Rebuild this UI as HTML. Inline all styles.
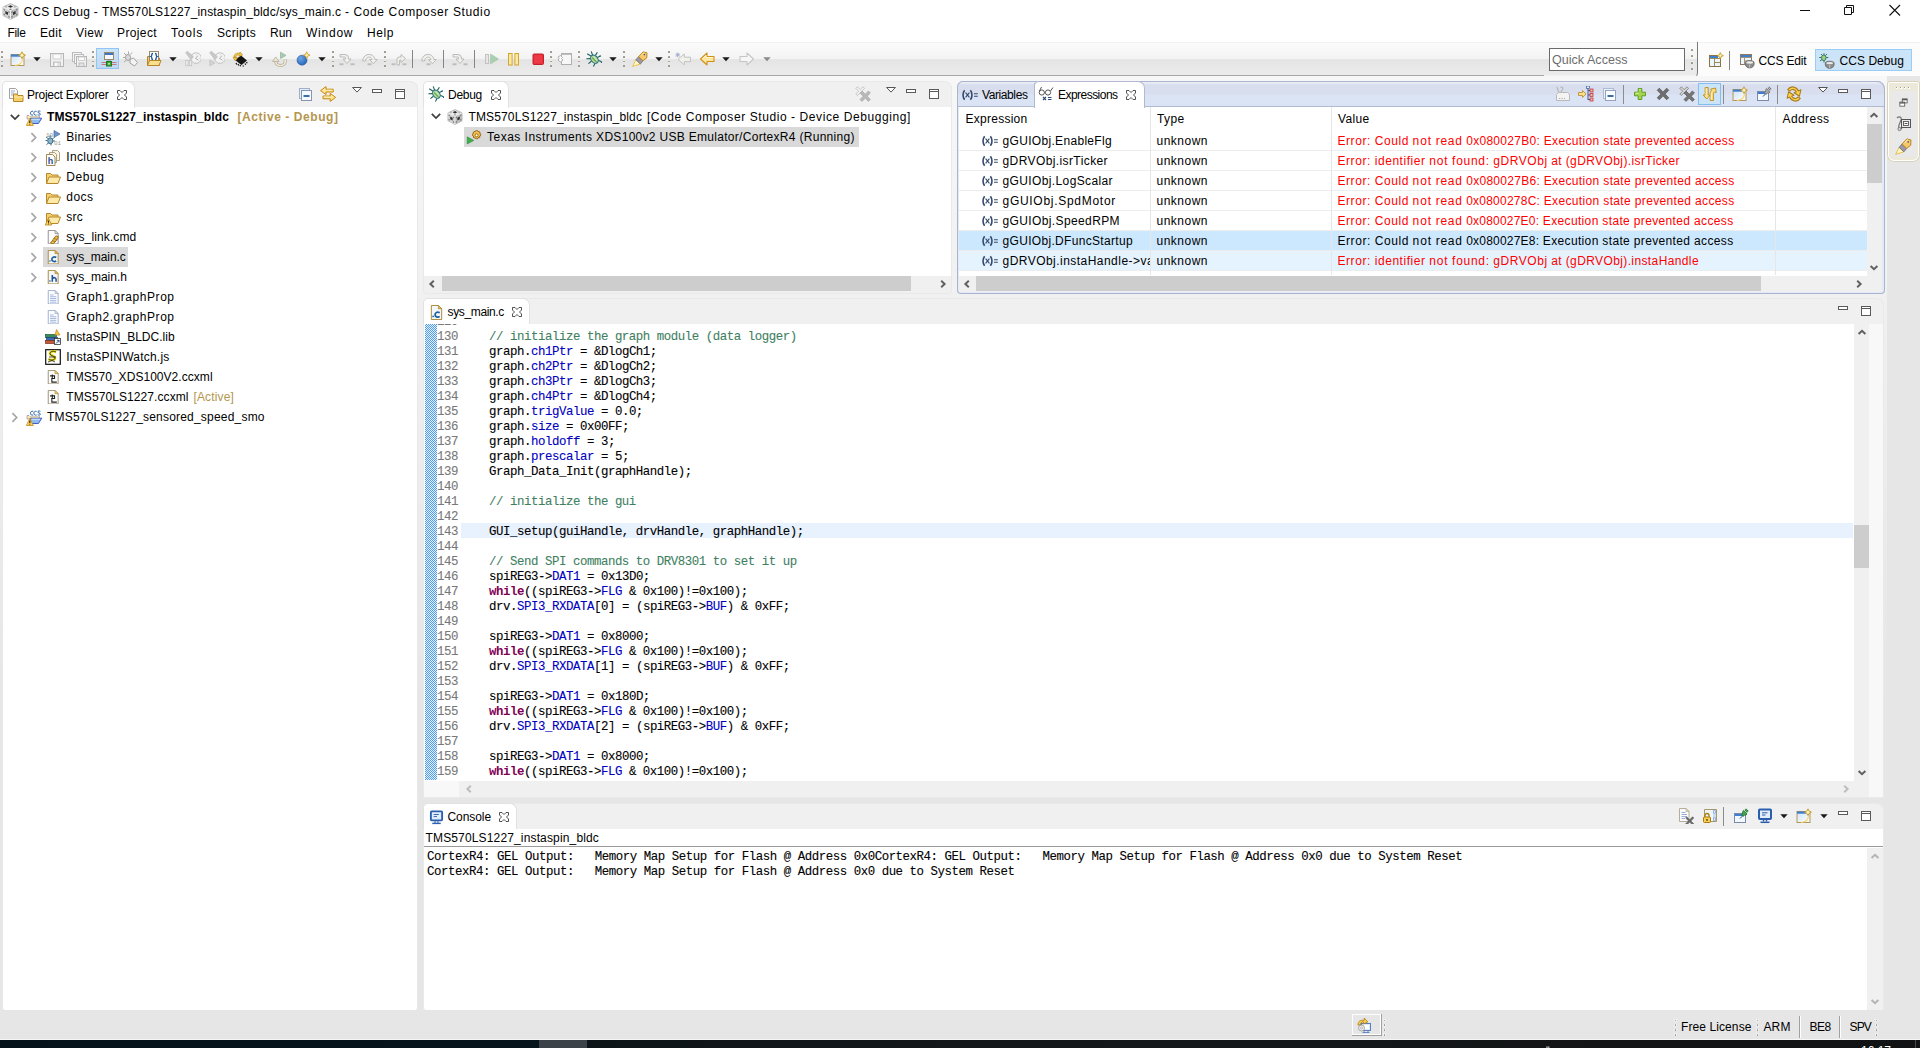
<!DOCTYPE html>
<html><head><meta charset="utf-8"><title>CCS Debug</title><style>
html,body{margin:0;padding:0}
html{width:1920px;height:1048px;overflow:hidden}
body{width:1920px;height:1048px;overflow:hidden;background:#e6e6e6;font-family:"Liberation Sans",sans-serif;font-size:12px;position:relative}
div,span.t,svg{position:absolute;display:block}
span.t{white-space:pre}
pre{position:absolute;margin:0;white-space:pre}
</style></head><body>
<div style="left:0px;top:0px;width:1920px;height:42px;background:#fff"></div>
<svg style="left:1.5px;top:2.5px;" width="17" height="17" viewBox="0 0 16 16"><path d="M8 0.6l7 3.2v8l-7 3.6-7-3.6v-8z" fill="#e9e9e9" stroke="#9a9a9a" stroke-width="0.7"/><path d="M1 3.8l7 3.2v8.4l-7-3.6z" fill="#d2d2d2"/><path d="M15 3.8l-7 3.2v8.4l7-3.6z" fill="#bdbdbd"/><path d="M1 3.8l7 3.2 7-3.2M8 7v8.4" stroke="#f6f6f6" stroke-width="0.8" fill="none"/><path d="M8 2l2.4 1.2-2.4 1.2-2.4-1.2z" fill="#2e2e2e"/><path d="M3.2 7.6l2.4 1.2v2.6l-2.4-1.2z" fill="#2e2e2e"/><path d="M12.8 7.6l-2.4 1.2v2.6l2.4-1.2z" fill="#2e2e2e"/><path d="M3.4 2.9l1.6 0.8-1.6 0.8M12.6 2.9l-1.6 0.8 1.6 0.8M8 5.2l1.6 0.8-1.6 0.6-1.6-0.6z" fill="#8a8a8a"/><path d="M1.6 5.4l1.2 0.6v1.4l-1.2-0.6zM6 7.6l1.2 0.6v1.4l-1.2-0.6zM1.6 9.8l1.2 0.6v1.4l-1.2-0.6zM6 12l1.2 0.6v1.4l-1.2-0.6zM14.4 5.4l-1.2 0.6v1.4l1.2-0.6zM10 7.6l-1.2 0.6v1.4l1.2-0.6zM14.4 9.8l-1.2 0.6v1.4l1.2-0.6zM10 12l-1.2 0.6v1.4l1.2-0.6z" fill="#7a7a7a"/></svg>
<span id="t1" class="t" style="left:23.4px;top:1.84px;line-height:20px;font-size:12px;color:#000;letter-spacing:0.302px;">CCS Debug -</span>
<span id="t2" class="t" style="left:101.9px;top:1.84px;line-height:20px;font-size:12px;color:#000;letter-spacing:0.168px;">TMS570LS1227_instaspin_bldc</span>
<span id="t3" class="t" style="left:275.9px;top:1.84px;line-height:20px;font-size:12px;color:#000;letter-spacing:0.167px;">/sys_main.c</span>
<span id="t4" class="t" style="left:344.9px;top:1.84px;line-height:20px;font-size:12px;color:#000;letter-spacing:0.624px;">- Code Composer Studio</span>
<svg style="left:1790px;top:0" width="130" height="22" viewBox="0 0 130 22"><path d="M10 10.5h10" stroke="#111" stroke-width="1"/><path d="M54.5 7.5h7v7h-7z M56.5 7.5v-2h7v7h-2" fill="none" stroke="#111" stroke-width="1"/><path d="M99.5 5l10.5 10.5M110 5l-10.5 10.5" stroke="#111" stroke-width="1.1"/></svg>
<span id="t5" class="t" style="left:7.5px;top:22.84px;line-height:20px;font-size:12px;color:#000;letter-spacing:-0.336px;">File</span>
<span id="t6" class="t" style="left:40px;top:22.84px;line-height:20px;font-size:12px;color:#000;letter-spacing:0.328px;">Edit</span>
<span id="t7" class="t" style="left:76px;top:22.84px;line-height:20px;font-size:12px;color:#000;letter-spacing:0.376px;">View</span>
<span id="t8" class="t" style="left:117px;top:22.84px;line-height:20px;font-size:12px;color:#000;letter-spacing:0.377px;">Project</span>
<span id="t9" class="t" style="left:171px;top:22.84px;line-height:20px;font-size:12px;color:#000;letter-spacing:0.797px;">Tools</span>
<span id="t10" class="t" style="left:217px;top:22.84px;line-height:20px;font-size:12px;color:#000;letter-spacing:0.330px;">Scripts</span>
<span id="t11" class="t" style="left:270px;top:22.84px;line-height:20px;font-size:12px;color:#000;letter-spacing:-0.005px;">Run</span>
<span id="t12" class="t" style="left:306px;top:22.84px;line-height:20px;font-size:12px;color:#000;letter-spacing:0.769px;">Window</span>
<span id="t13" class="t" style="left:367px;top:22.84px;line-height:20px;font-size:12px;color:#000;letter-spacing:0.578px;">Help</span>
<div style="left:0px;top:42px;width:1920px;height:34px;background:#fcfcfc"></div>
<div style="left:0px;top:42px;width:1920px;height:1px;background:#f1f1f1"></div>
<div style="left:0px;top:43px;width:1697px;height:32px;background:linear-gradient(#fbfbfb 0,#f3f3f3 49%,#e4e4e4 52%,#ececec 100%)"></div>
<div style="left:1544px;top:75px;width:153px;height:1px;background:#f1f1f1"></div>
<svg style="left:1690px;top:42px" width="10" height="36" viewBox="0 0 10 36"><path d="M8 0V34H10V0Z" fill="#fcfcfc"/><path d="M7.5 0V30C7.5 33 6.5 34.5 4.5 35.5" fill="none" stroke="#787878" stroke-width="1"/></svg>
<div style="left:0px;top:75px;width:1544px;height:1px;background:#a8a8a8"></div>
<div style="left:0.6px;top:50.6px;width:2.8px;height:2.8px;background:#ffffff;opacity:.35"></div>
<div style="left:1px;top:51.0px;width:1.9px;height:1.9px;background:#908b78;border-radius:0.6px;opacity:.9"></div>
<div style="left:0.6px;top:55.35px;width:2.8px;height:2.8px;background:#ffffff;opacity:.35"></div>
<div style="left:1px;top:55.75px;width:1.9px;height:1.9px;background:#908b78;border-radius:0.6px;opacity:.9"></div>
<div style="left:0.6px;top:60.1px;width:2.8px;height:2.8px;background:#ffffff;opacity:.35"></div>
<div style="left:1px;top:60.5px;width:1.9px;height:1.9px;background:#908b78;border-radius:0.6px;opacity:.9"></div>
<div style="left:0.6px;top:64.85px;width:2.8px;height:2.8px;background:#ffffff;opacity:.35"></div>
<div style="left:1px;top:65.25px;width:1.9px;height:1.9px;background:#908b78;border-radius:0.6px;opacity:.9"></div>
<svg style="left:9.5px;top:51.0px;" width="16" height="16" viewBox="0 0 16 16"><defs><linearGradient id="gnew2" x1="0" y1="0" x2="1" y2="1"><stop offset="0" stop-color="#cfe3f7"/><stop offset="1" stop-color="#ffffff"/></linearGradient></defs><rect x="1" y="3.5" width="13" height="11" fill="url(#gnew2)" stroke="#b3975a"/><rect x="1" y="3.5" width="9" height="2.2" fill="#3f7fd0"/><path d="M12.5 7.5c0 4-3 6.5-7.5 7" fill="none" stroke="#f7d56a" stroke-width="1.1"/><path d="M12 0.8l1.1 2.3 2.3 1.1-2.3 1.1-1.1 2.3-1.1-2.3-2.3-1.1 2.3-1.1z" fill="#fff3c0" stroke="#c59a22" stroke-width="0.9"/></svg>
<svg style="left:28.5px;top:51.0px;" width="16" height="16" viewBox="0 0 16 16"><path d="M4.300 6.200h7.400l-3.700 4.100z" fill="#1a1a1a"/></svg>
<svg style="left:48.5px;top:51.5px;" width="16" height="16" viewBox="0 0 16 16"><rect x="1.5" y="1.5" width="13" height="13" fill="#f1f1f1" stroke="#b5b5b5"/><rect x="4" y="2" width="8" height="5" fill="#fbfbfb" stroke="#c5c5c5" stroke-width="0.8"/><rect x="4.5" y="10" width="7" height="4.5" fill="#e2e2e2" stroke="#b5b5b5" stroke-width="0.8"/><rect x="6" y="11" width="2" height="3" fill="#fafafa"/></svg>
<svg style="left:71.5px;top:51.5px;" width="16" height="16" viewBox="0 0 16 16"><rect x="0.5" y="0.5" width="9" height="9" fill="#f4f4f4" stroke="#bdbdbd"/><rect x="2.5" y="2.5" width="9" height="9" fill="#f4f4f4" stroke="#bdbdbd"/><rect x="4.5" y="4.5" width="10" height="10" fill="#f1f1f1" stroke="#b5b5b5"/><rect x="6.5" y="5" width="6" height="3.5" fill="#fbfbfb" stroke="#c5c5c5" stroke-width="0.8"/><rect x="7" y="11" width="5" height="3.5" fill="#e2e2e2" stroke="#b5b5b5" stroke-width="0.8"/></svg>
<div style="left:91.6px;top:50.6px;width:2.8px;height:2.8px;background:#ffffff;opacity:.35"></div>
<div style="left:92px;top:51.0px;width:1.9px;height:1.9px;background:#908b78;border-radius:0.6px;opacity:.9"></div>
<div style="left:91.6px;top:55.35px;width:2.8px;height:2.8px;background:#ffffff;opacity:.35"></div>
<div style="left:92px;top:55.75px;width:1.9px;height:1.9px;background:#908b78;border-radius:0.6px;opacity:.9"></div>
<div style="left:91.6px;top:60.1px;width:2.8px;height:2.8px;background:#ffffff;opacity:.35"></div>
<div style="left:92px;top:60.5px;width:1.9px;height:1.9px;background:#908b78;border-radius:0.6px;opacity:.9"></div>
<div style="left:91.6px;top:64.85px;width:2.8px;height:2.8px;background:#ffffff;opacity:.35"></div>
<div style="left:92px;top:65.25px;width:1.9px;height:1.9px;background:#908b78;border-radius:0.6px;opacity:.9"></div>
<div style="left:96px;top:48px;width:23px;height:21px;background:linear-gradient(#cde4f8,#bfd8f0);box-shadow:0 0 0 1px #8fc6f6 inset"></div>
<svg style="left:100.5px;top:51.0px;" width="16" height="16" viewBox="0 0 16 16"><rect x="3.5" y="1.5" width="9" height="7" fill="#f6f9fd" stroke="#9a8a6a"/><rect x="4" y="2" width="8" height="2" fill="#3f74c6"/><path d="M7 8.5v3M9 8.5v3" stroke="#7d8aa3" stroke-width="1"/><path d="M0.5 11.5h15M0.5 13.5h15" stroke="#c47a7a" stroke-width="1"/><rect x="5.5" y="10.5" width="5" height="4.5" fill="#39a237" stroke="#1d7a22"/><rect x="7.2" y="12" width="1.6" height="1.6" fill="#d6f0c2"/></svg>
<svg style="left:122.0px;top:51.0px;" width="16" height="16" viewBox="0 0 16 16"><path d="M2 2l2 2M6.5 0.5v2.5M10 1.5l-1.5 2M1 6.5h2.5M2 11l2-1.5" stroke="#aaa" stroke-width="1"/><ellipse cx="6" cy="6.5" rx="2.6" ry="3" fill="#d9d9d9" stroke="#a2a2a2"/><path d="M8 8.5l3.5-1.5 4 4.5-3 3.5-4.5-3z" fill="#f3f3f3" stroke="#a2a2a2"/></svg>
<svg style="left:146.0px;top:50.5px;" width="16" height="16" viewBox="0 0 16 16"><path d="M1.5 14.5v-9h3l1 1.5h8v7.5z" fill="#f2c661" stroke="#b8872a"/><rect x="3.5" y="0.5" width="9" height="10" fill="#fdfdfd" stroke="#9a8a6a"/><path d="M7 2.5c-1.3 0-1.2 0.8-1.2 1.6 0 0.9-0.4 1.2-1 1.4 0.6 0.2 1 0.5 1 1.4 0 0.8-0.1 1.6 1.2 1.6M9 2.5c1.3 0 1.2 0.8 1.2 1.6 0 0.9 0.4 1.2 1 1.4-0.6 0.2-1 0.5-1 1.4 0 0.8 0.1 1.6-1.2 1.6" fill="none" stroke="#1a5a9c" stroke-width="1.3"/><path d="M1.5 14.5l2-5h11.5l-2 5z" fill="#fadf8f" stroke="#b8872a"/></svg>
<svg style="left:165.0px;top:51.0px;" width="16" height="16" viewBox="0 0 16 16"><path d="M4.300 6.200h7.400l-3.700 4.100z" fill="#1a1a1a"/></svg>
<svg style="left:185.0px;top:51.0px;" width="16" height="16" viewBox="0 0 16 16"><circle cx="11" cy="7.100" r="5.300" fill="#f4f4f4" stroke="#c4c4c4" stroke-width="1"/><path d="M13.200 4.600l-2.800 2.700 3.200 2" fill="none" stroke="#b0b0b0" stroke-width="1"/><path d="M11 3.300v0.800M11 10.500v0.800M7 7.300h0.800M14.200 7.300h0.800" stroke="#cfcfcf" stroke-width="0.8"/><path d="M0.600 1.800l1.800-1.600 6 5.400-2.600 2.800z" fill="#c8c8c8" stroke="#b8b8b8" stroke-width="0.6"/><rect x="0.800" y="9.500" width="2.300" height="5.200" fill="#f0f0f0" stroke="#c2c2c2" stroke-width="0.8"/><rect x="4.400" y="9.500" width="2.300" height="5.200" fill="#f0f0f0" stroke="#c2c2c2" stroke-width="0.8"/></svg>
<svg style="left:209.0px;top:51.0px;" width="16" height="16" viewBox="0 0 16 16"><circle cx="11" cy="7.100" r="5.300" fill="#f4f4f4" stroke="#c4c4c4" stroke-width="1"/><path d="M13.200 4.600l-2.800 2.700 3.200 2" fill="none" stroke="#b0b0b0" stroke-width="1"/><path d="M11 3.300v0.800M11 10.500v0.800M7 7.300h0.800M14.200 7.300h0.800" stroke="#cfcfcf" stroke-width="0.8"/><path d="M0.600 1.800l1.800-1.600 6 5.400-2.600 2.800z" fill="#c8c8c8" stroke="#b8b8b8" stroke-width="0.6"/><path d="M0.800 9l5 2.900-5 2.900z" fill="#d4d4d4" stroke="#c2c2c2" stroke-width="0.8"/></svg>
<svg style="left:232.0px;top:51.0px;" width="16" height="16" viewBox="0 0 16 16"><path d="M3 9l6-4.5 6 5-5.5 4.5z" fill="#151515"/><path d="M4 12l0.8 1.5M6 13l0.8 1.5M8 14l0.8 1.3M11 14.5l0.5 1M13 12.5l0.7 1.2M14.5 11l0.7 1.2" stroke="#111" stroke-width="1.2"/><path d="M2 6c0-3 3-4.5 5.5-3.5l0.5-1.5 2.5 3-3.5 1.5 0.3-1.5c-1.5-0.5-3.3 0.3-3.5 2z" fill="#f5c84a" stroke="#b98a1a" stroke-width="0.7"/><path d="M1 6.5l2.5 3.5 2-3.5z" fill="#f5c84a" stroke="#b98a1a" stroke-width="0.7"/></svg>
<svg style="left:251.0px;top:51.0px;" width="16" height="16" viewBox="0 0 16 16"><path d="M4.300 6.200h7.400l-3.700 4.100z" fill="#1a1a1a"/></svg>
<svg style="left:272.0px;top:51.0px;" width="16" height="16" viewBox="0 0 16 16"><path d="M8.5 1.2l5.5 3.2-5.5 3.2z" fill="#a9c9b0" stroke="#8fb59a" stroke-width="0.7"/><path d="M13.2 8v2.5c0 2.3-2 4-4.7 4s-4.7-1.7-4.7-4v-0.5" fill="none" stroke="#b3aa92" stroke-width="3"/><path d="M13.2 8v2.5c0 2.3-2 4-4.7 4s-4.7-1.7-4.7-4v-0.5" fill="none" stroke="#efeadc" stroke-width="1.6"/><path d="M0.6 10.4l3.2-4.4 3.2 4.4z" fill="#efeadc" stroke="#b3aa92" stroke-width="0.8"/></svg>
<svg style="left:294.0px;top:51.0px;" width="16" height="16" viewBox="0 0 16 16"><defs><radialGradient id="gball15" cx="0.35" cy="0.3" r="0.8"><stop offset="0" stop-color="#6fa5e6"/><stop offset="1" stop-color="#1f5fb5"/></radialGradient></defs><circle cx="8" cy="9.2" r="5" fill="url(#gball15)" stroke="#2a5aa0" stroke-width="0.6"/><path d="M12.7 0.8l1 2.4 2.3 1-2.3 1-1 2.4-1-2.4-2.3-1 2.3-1z" fill="#fff0b0" stroke="#c9991e" stroke-width="0.8"/></svg>
<svg style="left:314.0px;top:51.0px;" width="16" height="16" viewBox="0 0 16 16"><path d="M4.300 6.200h7.400l-3.700 4.100z" fill="#1a1a1a"/></svg>
<div style="left:331.6px;top:50.6px;width:2.8px;height:2.8px;background:#ffffff;opacity:.35"></div>
<div style="left:332px;top:51.0px;width:1.9px;height:1.9px;background:#908b78;border-radius:0.6px;opacity:.9"></div>
<div style="left:331.6px;top:55.35px;width:2.8px;height:2.8px;background:#ffffff;opacity:.35"></div>
<div style="left:332px;top:55.75px;width:1.9px;height:1.9px;background:#908b78;border-radius:0.6px;opacity:.9"></div>
<div style="left:331.6px;top:60.1px;width:2.8px;height:2.8px;background:#ffffff;opacity:.35"></div>
<div style="left:332px;top:60.5px;width:1.9px;height:1.9px;background:#908b78;border-radius:0.6px;opacity:.9"></div>
<div style="left:331.6px;top:64.85px;width:2.8px;height:2.8px;background:#ffffff;opacity:.35"></div>
<div style="left:332px;top:65.25px;width:1.9px;height:1.9px;background:#908b78;border-radius:0.6px;opacity:.9"></div>
<svg style="left:339.0px;top:51.0px;" width="16" height="16" viewBox="0 0 16 16"><g transform="translate(0 2)"><path d="M1 1.500h5q3.500 0 3.500 3.500v1h2.500l-4 4.500-4-4.500h2.500v-1q0-1-1-1h-4.500z" fill="#f1f1ec" stroke="#b6b6b6" stroke-width="0.9" stroke-linejoin="round"/><rect x="0.500" y="10.300" width="4" height="1.900" fill="#bcbcbc"/><rect x="11.500" y="10.300" width="4" height="1.900" fill="#bcbcbc"/></g></svg>
<svg style="left:362.0px;top:51.0px;" width="16" height="16" viewBox="0 0 16 16"><g transform="translate(0 2)"><path d="M0.800 8c0-8.500 11.500-8.500 12-1.500h2.400l-3.800 4.200-3.800-4.200h2.400c-0.500-3.500-6.200-3.200-6.500 1.500z" fill="#f1f1ec" stroke="#b6b6b6" stroke-width="0.9" stroke-linejoin="round"/><rect x="5.500" y="10.300" width="4" height="1.900" fill="#bcbcbc"/></g></svg>
<div style="left:383.6px;top:50.6px;width:2.8px;height:2.8px;background:#ffffff;opacity:.35"></div>
<div style="left:384px;top:51.0px;width:1.9px;height:1.9px;background:#908b78;border-radius:0.6px;opacity:.9"></div>
<div style="left:383.6px;top:55.35px;width:2.8px;height:2.8px;background:#ffffff;opacity:.35"></div>
<div style="left:384px;top:55.75px;width:1.9px;height:1.9px;background:#908b78;border-radius:0.6px;opacity:.9"></div>
<div style="left:383.6px;top:60.1px;width:2.8px;height:2.8px;background:#ffffff;opacity:.35"></div>
<div style="left:384px;top:60.5px;width:1.9px;height:1.9px;background:#908b78;border-radius:0.6px;opacity:.9"></div>
<div style="left:383.6px;top:64.85px;width:2.8px;height:2.8px;background:#ffffff;opacity:.35"></div>
<div style="left:384px;top:65.25px;width:1.9px;height:1.9px;background:#908b78;border-radius:0.6px;opacity:.9"></div>
<svg style="left:390.5px;top:51.0px;" width="16" height="16" viewBox="0 0 16 16"><g transform="translate(0 2)"><path d="M6 12v-5.500q0-2.500 2.500-2.500h1.500v-2.500l4.500 4-4.500 4v-2.500h-1q-0.500 0-0.500 0.500v4.500z" fill="#f1f1ec" stroke="#b6b6b6" stroke-width="0.9" stroke-linejoin="round"/><rect x="0.500" y="10.300" width="4" height="1.900" fill="#bcbcbc"/><rect x="11.500" y="10.300" width="4" height="1.900" fill="#bcbcbc"/></g></svg>
<div style="left:412px;top:50px;width:1px;height:18px;background:#858585"></div>
<svg style="left:421.0px;top:51.0px;" width="16" height="16" viewBox="0 0 16 16"><g transform="translate(0 2)"><path d="M0.800 8c0-8.500 11.500-8.500 12-1.500h2.400l-3.800 4.200-3.800-4.200h2.400c-0.500-3.500-6.200-3.200-6.500 1.500z" fill="#f1f1ec" stroke="#b6b6b6" stroke-width="0.9" stroke-linejoin="round"/><rect x="5.500" y="10.300" width="4" height="1.900" fill="#bcbcbc"/></g></svg>
<div style="left:443px;top:50px;width:1px;height:18px;background:#858585"></div>
<svg style="left:452.0px;top:51.0px;" width="16" height="16" viewBox="0 0 16 16"><g transform="translate(0 2)"><path d="M1 1.500h5q3.500 0 3.500 3.500v1h2.500l-4 4.500-4-4.500h2.500v-1q0-1-1-1h-4.500z" fill="#f1f1ec" stroke="#b6b6b6" stroke-width="0.9" stroke-linejoin="round"/><rect x="0.500" y="10.300" width="4" height="1.900" fill="#bcbcbc"/><rect x="11.500" y="10.300" width="4" height="1.900" fill="#bcbcbc"/></g></svg>
<div style="left:474px;top:50px;width:1px;height:18px;background:#858585"></div>
<svg style="left:483.5px;top:51.0px;" width="16" height="16" viewBox="0 0 16 16"><rect x="1.5" y="3.5" width="3" height="9" fill="#e6e6e6" stroke="#c2c2c2"/><path d="M6.5 3l8 5-8 5z" fill="#a9cfb0" stroke="#9fc4a6" stroke-width="0.6"/></svg>
<svg style="left:506.0px;top:51.0px;" width="16" height="16" viewBox="0 0 16 16"><rect x="2.5" y="2.5" width="3.6" height="11.5" fill="#fbe9a6" stroke="#d1a630"/><rect x="8.9" y="2.5" width="3.6" height="11.5" fill="#fbe9a6" stroke="#d1a630"/></svg>
<svg style="left:529.5px;top:51.0px;" width="16" height="16" viewBox="0 0 16 16"><rect x="3" y="3" width="10.5" height="10.5" rx="1" fill="#e8303a" stroke="#c2222c"/><rect x="4.5" y="4.5" width="7.5" height="7.5" fill="#ee3a46"/></svg>
<div style="left:549.6px;top:50.6px;width:2.8px;height:2.8px;background:#ffffff;opacity:.35"></div>
<div style="left:550px;top:51.0px;width:1.9px;height:1.9px;background:#908b78;border-radius:0.6px;opacity:.9"></div>
<div style="left:549.6px;top:55.35px;width:2.8px;height:2.8px;background:#ffffff;opacity:.35"></div>
<div style="left:550px;top:55.75px;width:1.9px;height:1.9px;background:#908b78;border-radius:0.6px;opacity:.9"></div>
<div style="left:549.6px;top:60.1px;width:2.8px;height:2.8px;background:#ffffff;opacity:.35"></div>
<div style="left:550px;top:60.5px;width:1.9px;height:1.9px;background:#908b78;border-radius:0.6px;opacity:.9"></div>
<div style="left:549.6px;top:64.85px;width:2.8px;height:2.8px;background:#ffffff;opacity:.35"></div>
<div style="left:550px;top:65.25px;width:1.9px;height:1.9px;background:#908b78;border-radius:0.6px;opacity:.9"></div>
<svg style="left:556.5px;top:51.0px;" width="16" height="16" viewBox="0 0 16 16"><rect x="4.5" y="2.5" width="10" height="11" fill="#f7f7f7" stroke="#b0b0b0"/><path d="M4.5 3h10" stroke="#b0b0b0" stroke-width="1.6"/><path d="M1 6l2.5-1.5 2 2-1 1 1.5 1.5-2.5 2-2.5-2 1.2-1.2z" fill="#fafafa" stroke="#a8a8a8" stroke-width="0.9"/></svg>
<div style="left:577.6px;top:50.6px;width:2.8px;height:2.8px;background:#ffffff;opacity:.35"></div>
<div style="left:578px;top:51.0px;width:1.9px;height:1.9px;background:#908b78;border-radius:0.6px;opacity:.9"></div>
<div style="left:577.6px;top:55.35px;width:2.8px;height:2.8px;background:#ffffff;opacity:.35"></div>
<div style="left:578px;top:55.75px;width:1.9px;height:1.9px;background:#908b78;border-radius:0.6px;opacity:.9"></div>
<div style="left:577.6px;top:60.1px;width:2.8px;height:2.8px;background:#ffffff;opacity:.35"></div>
<div style="left:578px;top:60.5px;width:1.9px;height:1.9px;background:#908b78;border-radius:0.6px;opacity:.9"></div>
<div style="left:577.6px;top:64.85px;width:2.8px;height:2.8px;background:#ffffff;opacity:.35"></div>
<div style="left:578px;top:65.25px;width:1.9px;height:1.9px;background:#908b78;border-radius:0.6px;opacity:.9"></div>
<svg style="left:586.0px;top:51.0px;" width="16" height="16" viewBox="0 0 16 16"><path d="M5.2 5.2l-4-2.4M6.6 4.2l-1.4-3.8M4.4 7.6l-4 0.2M5.4 10.2l-3 2.4M9.4 4.4l2-3.2M11.4 6.4l3.6-1.6M12 9.2l3.6 1.6M9 12.4l-1.6 3.2M13.4 4.8l1.2 0.8M15.6 10.8l-0.2 1.2" stroke="#1f5f5f" stroke-width="1.1" fill="none"/><ellipse cx="8.4" cy="8.2" rx="3.3" ry="4.5" transform="rotate(-38 8.4 8.2)" fill="#b4d99c" stroke="#1f6a7a" stroke-width="1"/><path d="M6.2 6.4l4.2 4.4" stroke="#6fae5a" stroke-width="1.6"/><path d="M7.2 5.6l3.8 4" stroke="#e4f3d6" stroke-width="0.9"/></svg>
<svg style="left:605.0px;top:51.0px;" width="16" height="16" viewBox="0 0 16 16"><path d="M4.300 6.200h7.400l-3.700 4.100z" fill="#1a1a1a"/></svg>
<div style="left:622.6px;top:50.6px;width:2.8px;height:2.8px;background:#ffffff;opacity:.35"></div>
<div style="left:623px;top:51.0px;width:1.9px;height:1.9px;background:#908b78;border-radius:0.6px;opacity:.9"></div>
<div style="left:622.6px;top:55.35px;width:2.8px;height:2.8px;background:#ffffff;opacity:.35"></div>
<div style="left:623px;top:55.75px;width:1.9px;height:1.9px;background:#908b78;border-radius:0.6px;opacity:.9"></div>
<div style="left:622.6px;top:60.1px;width:2.8px;height:2.8px;background:#ffffff;opacity:.35"></div>
<div style="left:623px;top:60.5px;width:1.9px;height:1.9px;background:#908b78;border-radius:0.6px;opacity:.9"></div>
<div style="left:622.6px;top:64.85px;width:2.8px;height:2.8px;background:#ffffff;opacity:.35"></div>
<div style="left:623px;top:65.25px;width:1.9px;height:1.9px;background:#908b78;border-radius:0.6px;opacity:.9"></div>
<svg style="left:631.5px;top:51.0px;" width="16" height="16" viewBox="0 0 16 16"><path d="M0.600 15.400l3.200-6.600 4.600 4.200z" fill="#fff6c8" stroke="#e8b830" stroke-width="0.8" stroke-linejoin="round"/><path d="M3.800 8.800l2.800-3.200 4.400 4.200-2.600 3.200z" fill="#9a98a6" stroke="#6a6a74" stroke-width="0.7"/><path d="M6.600 5.600l4.600-4.800 3.800 1-0.200 5-3.800 3z" fill="#f6c86a" stroke="#b8801a" stroke-width="0.9" stroke-linejoin="round"/><path d="M9.200 4.400l3-3" stroke="#fde6a8" stroke-width="1"/><circle cx="12.400" cy="3.600" r="0.800" fill="#2a5a9a"/></svg>
<svg style="left:650.5px;top:51.0px;" width="16" height="16" viewBox="0 0 16 16"><path d="M4.300 6.200h7.400l-3.700 4.100z" fill="#1a1a1a"/></svg>
<div style="left:667.6px;top:50.6px;width:2.8px;height:2.8px;background:#ffffff;opacity:.35"></div>
<div style="left:668px;top:51.0px;width:1.9px;height:1.9px;background:#908b78;border-radius:0.6px;opacity:.9"></div>
<div style="left:667.6px;top:55.35px;width:2.8px;height:2.8px;background:#ffffff;opacity:.35"></div>
<div style="left:668px;top:55.75px;width:1.9px;height:1.9px;background:#908b78;border-radius:0.6px;opacity:.9"></div>
<div style="left:667.6px;top:60.1px;width:2.8px;height:2.8px;background:#ffffff;opacity:.35"></div>
<div style="left:668px;top:60.5px;width:1.9px;height:1.9px;background:#908b78;border-radius:0.6px;opacity:.9"></div>
<div style="left:667.6px;top:64.85px;width:2.8px;height:2.8px;background:#ffffff;opacity:.35"></div>
<div style="left:668px;top:65.25px;width:1.9px;height:1.9px;background:#908b78;border-radius:0.6px;opacity:.9"></div>
<svg style="left:675.0px;top:51.0px;" width="16" height="16" viewBox="0 0 16 16"><path d="M15.500 6.200h-6.200v-3.200l-6.300 5.400 6.300 5.400v-3.200h6.200z" fill="#f1f1ec" stroke="#bdbdbd" stroke-width="0.9" stroke-linejoin="round"/><path d="M1 2.200l3.400 3.400M4.400 2.200l-3.400 3.400M2.700 1.400v5M0.400 3.900h4.600" stroke="#9aa6c4" stroke-width="0.8"/></svg>
<svg style="left:698.5px;top:51.0px;" width="16" height="16" viewBox="0 0 16 16"><path d="M15 5.5h-7v-3.5l-6.5 6 6.5 6v-3.5h7z" fill="#fce6a0" stroke="#d0901a" stroke-width="1.1" stroke-linejoin="round"/><path d="M14 6.5h-7v-2l-3.8 3.5" fill="none" stroke="#fff6d4" stroke-width="0.9"/></svg>
<svg style="left:718.0px;top:51.0px;" width="16" height="16" viewBox="0 0 16 16"><path d="M4.300 6.200h7.400l-3.700 4.100z" fill="#1a1a1a"/></svg>
<svg style="left:738.5px;top:51.0px;" width="16" height="16" viewBox="0 0 16 16"><path d="M1 5.5h7v-3.5l6.5 6-6.5 6v-3.5h-7z" fill="#f6f6f6" stroke="#c6c6c6" stroke-width="1.1" stroke-linejoin="round"/></svg>
<svg style="left:758.5px;top:51.0px;" width="16" height="16" viewBox="0 0 16 16"><path d="M4.300 6.200h7.400l-3.700 4.100z" fill="#8a8a8a"/></svg>
<div style="left:1549px;top:48px;width:136px;height:23px;background:#fff;box-shadow:0 0 0 1px #6a6a6a inset"></div>
<span id="t14" class="t" style="left:1552px;top:49.67px;line-height:20px;font-size:12.5px;color:#6d6d6d;letter-spacing:0.039px;">Quick Access</span>
<div style="left:1690.8999999999999px;top:48.4px;width:2.8px;height:2.8px;background:#ffffff;opacity:.35"></div>
<div style="left:1691.3px;top:48.8px;width:1.9px;height:1.9px;background:#908b78;border-radius:0.6px;opacity:.9"></div>
<div style="left:1690.8999999999999px;top:54.9px;width:2.8px;height:2.8px;background:#ffffff;opacity:.35"></div>
<div style="left:1691.3px;top:55.3px;width:1.9px;height:1.9px;background:#908b78;border-radius:0.6px;opacity:.9"></div>
<div style="left:1690.8999999999999px;top:61.4px;width:2.8px;height:2.8px;background:#ffffff;opacity:.35"></div>
<div style="left:1691.3px;top:61.8px;width:1.9px;height:1.9px;background:#908b78;border-radius:0.6px;opacity:.9"></div>
<div style="left:1690.8999999999999px;top:67.89999999999999px;width:2.8px;height:2.8px;background:#ffffff;opacity:.35"></div>
<div style="left:1691.3px;top:68.3px;width:1.9px;height:1.9px;background:#908b78;border-radius:0.6px;opacity:.9"></div>
<svg style="left:1708.0px;top:52.0px;" width="16" height="16" viewBox="0 0 16 16"><rect x="1.5" y="3.5" width="11" height="11" fill="#eef6fd" stroke="#8a7444"/><path d="M1.5 6.5h11M6.5 6.5v8M6.5 10.5h6" stroke="#a08a5a" stroke-width="1"/><rect x="2" y="4" width="8" height="2" fill="#3f7fd0"/><path d="M12.3 0.6l0.9 2.2 2.2 0.9-2.2 0.9-0.9 2.2-0.9-2.2-2.2-0.9 2.2-0.9z" fill="#fff3c0" stroke="#c59a22" stroke-width="0.9"/></svg>
<div style="left:1729px;top:51px;width:1px;height:19px;background:#858585"></div>
<svg style="left:1739.0px;top:53.0px;" width="16" height="16" viewBox="0 0 16 16"><rect x="1.5" y="1.5" width="11" height="10" fill="#eef6fd" stroke="#8a7a5a"/><path d="M1.5 4.5h11M5.5 4.5v7M5.5 8h7" stroke="#a09478" stroke-width="1"/><rect x="2" y="2" width="10" height="2" fill="#3f7fd0"/><path d="M6.3 9.4c0-1 2-1.8 4.4-1.8s4.4 0.8 4.4 1.8v2c0 1.6-2 3.6-4.4 3.6s-4.4-2-4.4-3.6z" fill="#8c8c8c" stroke="#5a5a5a" stroke-width="0.7"/><ellipse cx="10.7" cy="9.5" rx="3.4" ry="1.2" fill="#e9e9e9"/><path d="M10.7 11.5v3.2" stroke="#d0d0d0" stroke-width="0.8"/></svg>
<span id="t15" class="t" style="left:1758.5px;top:50.84px;line-height:20px;font-size:12px;color:#000;letter-spacing:-0.170px;">CCS Edit</span>
<div style="left:1815px;top:49px;width:97px;height:22px;background:#cce4f7;box-shadow:0 0 0 1px #99cdf5 inset"></div>
<svg style="left:1819.0px;top:53.0px;" width="16" height="16" viewBox="0 0 16 16"><path d="M2 1l1.5 1.5M5 0.3v2M8 1l-1.5 1.5M0.3 4.5h2M1 8l2-1.5M9.3 4.5h-2M5 9.5v-2" stroke="#1f5f4f" stroke-width="0.9"/><ellipse cx="4.8" cy="4.8" rx="2.3" ry="2.8" fill="#9fd07a" stroke="#1f6a5a" stroke-width="0.8"/><path d="M6.3 10c0-1 2-1.8 4.4-1.8s4.4 0.8 4.4 1.8v1.8c0 1.6-2 3.6-4.4 3.6s-4.4-2-4.4-3.6z" fill="#8c8c8c" stroke="#5a5a5a" stroke-width="0.7"/><ellipse cx="10.7" cy="10.1" rx="3.4" ry="1.2" fill="#e9e9e9"/><path d="M10.7 12v3.2" stroke="#d0d0d0" stroke-width="0.8"/></svg>
<span id="t16" class="t" style="left:1839.5px;top:51.34px;line-height:20px;font-size:12px;color:#000;letter-spacing:0.052px;">CCS Debug</span>
<div style="left:0px;top:76px;width:1887px;height:934px;background:linear-gradient(#f7f7f7 0,#f1f1f1 200px,#e6e6e6 620px)"></div>
<div style="left:2px;top:81px;width:416px;height:930px;border-radius:6px 8px 4px 4px;background:#f0f0f0;box-shadow:0 0 0 1px #e9e9e9 inset"></div>
<div style="left:3px;top:107px;width:414px;height:903px;background:#fff;border-radius:0 0 3px 3px"></div>
<div style="left:2px;top:81px;width:131px;height:26px;background:#fff;border-radius:5px 7px 0 0;border:1px solid #e2e2e2;border-bottom:none"></div>
<svg style="left:7.5px;top:86.5px;" width="16" height="16" viewBox="0 0 16 16"><path d="M1.5 1.5h6l2 2v8h-8z" fill="#fbfbfb" stroke="#8a8a8a" stroke-width="0.8"/><path d="M3 4h4M3 6h3M3 8h3" stroke="#7f9fd0" stroke-width="0.8"/><path d="M5.5 14.5v-7.5h3.5l1 1.5h5v6z" fill="#f7cf6b" stroke="#b8872a"/><path d="M6 10h9" stroke="#fde9a8" stroke-width="1"/></svg>
<span id="t17" class="t" style="left:27px;top:84.84px;line-height:20px;font-size:12px;color:#000;letter-spacing:-0.242px;">Project Explorer</span>
<svg style="left:114.0px;top:87.0px;" width="16" height="16" viewBox="0 0 16 16"><path d="M3.5 3.5h2.5l2 2 2-2h2.5v2.5l-2 2 2 2v2.5h-2.5l-2-2-2 2h-2.5v-2.5l2-2-2-2z" fill="#fff" stroke="#505050" stroke-width="1" stroke-linejoin="miter"/></svg>
<svg style="left:298.0px;top:86.0px;" width="16" height="16" viewBox="0 0 16 16"><rect x="1.5" y="2.5" width="10" height="10" fill="#dcf0fb" stroke="#a4aec8"/><rect x="3.5" y="4.5" width="10" height="10" fill="#f2fbff" stroke="#8a94b0"/><path d="M5.5 10h6" stroke="#0f4a8a" stroke-width="1.6"/></svg>
<svg style="left:320.0px;top:86.0px;" width="16" height="16" viewBox="0 0 16 16"><path d="M0.6 4.6L6 0.6V3.2H13.2V6H6V8.6Z" fill="#fde48e" stroke="#c8860a" stroke-width="1" stroke-linejoin="round"/><path d="M15.6 11.4L10.2 7.4V10H3V12.8H10.2V15.4Z" fill="#fde48e" stroke="#c8860a" stroke-width="1" stroke-linejoin="round"/><path d="M2.6 4.6l2.6-1.9M6.5 4.2h6M13.6 11.4l-2.6-1.9M9.8 11h-6" stroke="#fff8d8" stroke-width="0.8" fill="none"/></svg>
<svg style="left:349.0px;top:84.0px;" width="16" height="16" viewBox="0 0 16 16"><path d="M3.6 3.5h8.8l-4.4 4.6z" fill="#fff" stroke="#555" stroke-width="1"/></svg>
<svg style="left:369.0px;top:86.0px;" width="16" height="16" viewBox="0 0 16 16"><rect x="3.5" y="3.5" width="9" height="3" fill="#fff" stroke="#5a5a5a"/></svg>
<svg style="left:392.0px;top:86.0px;" width="16" height="16" viewBox="0 0 16 16"><rect x="3.5" y="3.5" width="9" height="9" fill="#fff" stroke="#5a5a5a"/><path d="M3.5 5.5h9" stroke="#5a5a5a" stroke-width="1"/></svg>
<svg style="left:6.5px;top:109.5px;" width="16" height="16" viewBox="0 0 16 16"><path d="M3.8 4.8l4.2 4.3 4.2-4.3" fill="none" stroke="#404040" stroke-width="1.7"/></svg>
<svg style="left:26.0px;top:109.5px;" width="16" height="16" viewBox="0 0 16 16"><path d="M1 5.5h2l1 1h9.5v2.5h-12.5z" fill="#fbe6a2" stroke="#8a7fb0" stroke-width="0.6"/><path d="M2.5 6.5h10.5v1.6h-10.5z" fill="#fde9a8"/><path d="M4.5 8.2h11.3l-3.4 5.3h-7.9z" fill="#8fbdf2" stroke="#3050c0" stroke-width="0.9"/><path d="M5.5 9.2h8.5" stroke="#d6e8fb" stroke-width="1"/><path d="M7.2 1.4c-1.6-0.6-2.7 0.4-2.7 1.8s1.1 2.4 2.7 1.8M10.6 1.4c-1.6-0.6-2.7 0.4-2.7 1.8s1.1 2.4 2.7 1.8M14.4 1.3c-1.4-0.6-2.6-0.2-2.6 0.7 0 1.3 2.6 0.8 2.6 2.1 0 1-1.4 1.3-2.8 0.7" fill="none" stroke="#1c5a9e" stroke-width="0.95"/><path d="M3.8 8.4l3.5 7.1h-7z" fill="#f9d264" stroke="#c98a1a" stroke-width="0.8" stroke-linejoin="round"/><path d="M3.8 10.6v2.4M3.8 13.7v0.9" stroke="#2a1a00" stroke-width="1.1"/></svg>
<span id="t18" class="t" style="left:47.0px;top:106.84px;line-height:20px;font-size:12px;color:#000;font-weight:bold;letter-spacing:0.145px;">TMS570LS1227_instaspin_bldc</span>
<span id="t19" class="t" style="left:237.5px;top:106.84px;line-height:20px;font-size:12px;color:#b5964d;font-weight:bold;letter-spacing:0.562px;">[Active - Debug]</span>
<svg style="left:25.799999999999997px;top:129.5px;" width="16" height="16" viewBox="0 0 16 16"><path d="M5.4 3.2l4.3 4.3-4.3 4.3" fill="none" stroke="#a6a6a6" stroke-width="1.7"/></svg>
<svg style="left:44.7px;top:129.5px;" width="16" height="16" viewBox="0 0 16 16"><text x="1" y="6.5" font-family="Liberation Mono, monospace" font-size="6" fill="#8a8a8a">10</text><text x="9" y="15" font-family="Liberation Mono, monospace" font-size="6" fill="#9a9a9a">01</text><path d="M9 0.5l6 3.5-6 3.5z" fill="#6f93c8" stroke="#4a6fa8" stroke-width="0.7"/><path d="M1 7l2 1.5M5 5.5v2M9 7.5l-1.5 1.5M0.5 10.5h2M1.5 14.5l2-1.5M10 11h-2M6 15.5v-2" stroke="#2a5f7f" stroke-width="0.9"/><ellipse cx="5.3" cy="10.8" rx="2.6" ry="3" fill="#8fb6c8" stroke="#2a5f7f" stroke-width="0.9"/></svg>
<span id="t20" class="t" style="left:66.3px;top:126.84px;line-height:20px;font-size:12px;color:#000;letter-spacing:0.243px;">Binaries</span>
<svg style="left:25.799999999999997px;top:149.5px;" width="16" height="16" viewBox="0 0 16 16"><path d="M5.4 3.2l4.3 4.3-4.3 4.3" fill="none" stroke="#a6a6a6" stroke-width="1.7"/></svg>
<svg style="left:44.7px;top:149.5px;" width="16" height="16" viewBox="0 0 16 16"><path d="M7.5 0.5h5l2 2v8h-7z" fill="#f7f3e6" stroke="#9a8a6a" stroke-width="0.8"/><path d="M4.5 2.5h5l2 2v8h-7z" fill="#f7f3e6" stroke="#9a8a6a" stroke-width="0.8"/><path d="M1.5 4.5h6l2.5 2.5v8.5h-8.5z" fill="#fdfdfd" stroke="#9a7a3a" stroke-width="0.9"/><text x="2.8" y="14" font-family="Liberation Sans, sans-serif" font-size="9" font-weight="bold" fill="#1f4fa0">h</text></svg>
<span id="t21" class="t" style="left:66.3px;top:146.84px;line-height:20px;font-size:12px;color:#000;letter-spacing:0.350px;">Includes</span>
<svg style="left:25.799999999999997px;top:169.5px;" width="16" height="16" viewBox="0 0 16 16"><path d="M5.4 3.2l4.3 4.3-4.3 4.3" fill="none" stroke="#a6a6a6" stroke-width="1.7"/></svg>
<svg style="left:44.7px;top:169.5px;" width="16" height="16" viewBox="0 0 16 16"><path d="M1.5 13.5v-10h4l1.5 1.5h6v2" fill="#f4cf72" stroke="#b8872a"/><path d="M1.5 13.5l2.5-6.5h11.5l-2.5 6.5z" fill="#fde9a8" stroke="#b8872a"/></svg>
<span id="t22" class="t" style="left:66.3px;top:166.84px;line-height:20px;font-size:12px;color:#000;letter-spacing:0.585px;">Debug</span>
<svg style="left:25.799999999999997px;top:189.5px;" width="16" height="16" viewBox="0 0 16 16"><path d="M5.4 3.2l4.3 4.3-4.3 4.3" fill="none" stroke="#a6a6a6" stroke-width="1.7"/></svg>
<svg style="left:44.7px;top:189.5px;" width="16" height="16" viewBox="0 0 16 16"><path d="M1.5 13.5v-10h4l1.5 1.5h6v2" fill="#f4cf72" stroke="#b8872a"/><path d="M1.5 13.5l2.5-6.5h11.5l-2.5 6.5z" fill="#fde9a8" stroke="#b8872a"/></svg>
<span id="t23" class="t" style="left:66.3px;top:186.84px;line-height:20px;font-size:12px;color:#000;letter-spacing:0.485px;">docs</span>
<svg style="left:25.799999999999997px;top:209.5px;" width="16" height="16" viewBox="0 0 16 16"><path d="M5.4 3.2l4.3 4.3-4.3 4.3" fill="none" stroke="#a6a6a6" stroke-width="1.7"/></svg>
<svg style="left:44.7px;top:209.5px;" width="16" height="16" viewBox="0 0 16 16"><path d="M1.5 13.5v-10h4l1.5 1.5h6v2" fill="#f4cf72" stroke="#b8872a"/><path d="M1.5 13.5l2.5-6.5h11.5l-2.5 6.5z" fill="#fde9a8" stroke="#b8872a"/><path d="M3.5 8.5l3.3 6.5h-6.6z" fill="#f7d25a" stroke="#b8872a" stroke-width="0.8"/><path d="M3.5 10.5v2.3M3.5 13.5v0.8" stroke="#3a2a00" stroke-width="1"/></svg>
<span id="t24" class="t" style="left:66.3px;top:206.84px;line-height:20px;font-size:12px;color:#000;letter-spacing:0.267px;">src</span>
<svg style="left:25.799999999999997px;top:229.5px;" width="16" height="16" viewBox="0 0 16 16"><path d="M5.4 3.2l4.3 4.3-4.3 4.3" fill="none" stroke="#a6a6a6" stroke-width="1.7"/></svg>
<svg style="left:46.3px;top:229.60000000000002px;" width="14.4" height="14.4" viewBox="0 0 16 16"><path d="M2.5 0.5h7.5l3.5 3.5v11.5h-11z" fill="#fdfdfd" stroke="#8a8a8a"/><path d="M10 0.5v3.5h3.5z" fill="#e9e9e9" stroke="#8a8a8a" stroke-width="0.8"/><path d="M5 14.5l3-4 3-4 3 1-2 3.5-4 4.5z" fill="#f2c24a" stroke="#8a5a0a" stroke-width="0.9"/><path d="M7 12l4 1M8.5 9.5l4 1" stroke="#8a5a0a" stroke-width="0.8"/></svg>
<span id="t25" class="t" style="left:66.3px;top:226.84px;line-height:20px;font-size:12px;color:#000;letter-spacing:0.109px;">sys_link.cmd</span>
<div style="left:43px;top:247px;width:85px;height:20px;background:#d9d9d9"></div>
<svg style="left:25.799999999999997px;top:249.5px;" width="16" height="16" viewBox="0 0 16 16"><path d="M5.4 3.2l4.3 4.3-4.3 4.3" fill="none" stroke="#a6a6a6" stroke-width="1.7"/></svg>
<svg style="left:46.3px;top:249.60000000000002px;" width="14.4" height="14.4" viewBox="0 0 16 16"><path d="M2.5 0.5h7.5l3.5 3.5v11.5h-11z" fill="#f4f8fd" stroke="#a8842e"/><path d="M10 0.5v3.5h3.5z" fill="#e6c35a" stroke="#a8842e" stroke-width="0.8"/><circle cx="4.4" cy="12.2" r="0.9" fill="#1f5fa0"/><path d="M11.4 8.3c-2.6-1.4-4.9-0.1-4.9 2s2.3 3.4 4.9 2" fill="none" stroke="#1f5fa0" stroke-width="1.9"/></svg>
<span id="t26" class="t" style="left:66.3px;top:246.84px;line-height:20px;font-size:12px;color:#000;letter-spacing:-0.053px;">sys_main.c</span>
<svg style="left:25.799999999999997px;top:269.5px;" width="16" height="16" viewBox="0 0 16 16"><path d="M5.4 3.2l4.3 4.3-4.3 4.3" fill="none" stroke="#a6a6a6" stroke-width="1.7"/></svg>
<svg style="left:46.3px;top:269.6px;" width="14.4" height="14.4" viewBox="0 0 16 16"><path d="M2.5 0.5h7.5l3.5 3.5v11.5h-11z" fill="#f4f8fd" stroke="#a8842e"/><path d="M10 0.5v3.5h3.5z" fill="#e6c35a" stroke="#a8842e" stroke-width="0.8"/><circle cx="4.4" cy="12.2" r="0.9" fill="#1f4fa0"/><path d="M7 5.5v7.5M7 9.6c1.2-1.6 4.2-1.6 4.2 0.8v2.6" fill="none" stroke="#1f4fa0" stroke-width="1.7"/></svg>
<span id="t27" class="t" style="left:66.3px;top:266.84px;line-height:20px;font-size:12px;color:#000;letter-spacing:-0.010px;">sys_main.h</span>
<svg style="left:46.3px;top:289.6px;" width="14.4" height="14.4" viewBox="0 0 16 16"><path d="M2.5 0.5h7.5l3.5 3.5v11.5h-11z" fill="#fdfeff" stroke="#9aa9c9"/><path d="M10 0.5v3.5h3.5z" fill="#e3e9f5" stroke="#9aa9c9" stroke-width="0.8"/><path d="M4.5 5.5h4M4.5 7.5h7M4.5 9.5h7M4.5 11.5h7M4.5 13.5h7" stroke="#8ea6d6" stroke-width="0.9"/></svg>
<span id="t28" class="t" style="left:66.3px;top:286.84px;line-height:20px;font-size:12px;color:#000;letter-spacing:0.556px;">Graph1.graphProp</span>
<svg style="left:46.3px;top:309.6px;" width="14.4" height="14.4" viewBox="0 0 16 16"><path d="M2.5 0.5h7.5l3.5 3.5v11.5h-11z" fill="#fdfeff" stroke="#9aa9c9"/><path d="M10 0.5v3.5h3.5z" fill="#e3e9f5" stroke="#9aa9c9" stroke-width="0.8"/><path d="M4.5 5.5h4M4.5 7.5h7M4.5 9.5h7M4.5 11.5h7M4.5 13.5h7" stroke="#8ea6d6" stroke-width="0.9"/></svg>
<span id="t29" class="t" style="left:66.3px;top:306.84px;line-height:20px;font-size:12px;color:#000;letter-spacing:0.556px;">Graph2.graphProp</span>
<svg style="left:44.7px;top:328.6px;" width="16" height="16" viewBox="0 0 16 16"><rect x="0.5" y="5.5" width="11" height="3" fill="#3a8a5a" stroke="#1f5a3a" stroke-width="0.7"/><rect x="1.5" y="8.5" width="11" height="3" fill="#3a6ab0" stroke="#1f3f7a" stroke-width="0.7"/><rect x="0.5" y="11.5" width="11" height="3" fill="#c05a3a" stroke="#7a2f1a" stroke-width="0.7"/><path d="M11.5 0.5l1.5 2.5 2 3h-5z" fill="#f7c53a" stroke="#b8872a" stroke-width="0.7"/><rect x="9.5" y="9.5" width="6" height="6" fill="#fff" stroke="#333" stroke-width="0.8"/><path d="M11 14.5l3-3M14 11.3h-2.2M14 11.3v2.2" stroke="#1f3f7a" stroke-width="0.9" fill="none"/></svg>
<span id="t30" class="t" style="left:66.3px;top:326.84px;line-height:20px;font-size:12px;color:#000;letter-spacing:0.014px;">InstaSPIN_BLDC.lib</span>
<svg style="left:44.7px;top:348.6px;" width="16" height="16" viewBox="0 0 16 16"><rect x="0.7" y="0.7" width="14.6" height="14.6" fill="#fff" stroke="#111" stroke-width="1.2"/><path d="M11 3c-3-1.5-6-0.5-6 1.8 0 2.2 5 1.8 5 4.2 0 2-3.5 2.8-6.5 1.2" fill="none" stroke="#e8d800" stroke-width="2.6"/><path d="M11 3c-3-1.5-6-0.5-6 1.8 0 2.2 5 1.8 5 4.2 0 2-3.5 2.8-6.5 1.2" fill="none" stroke="#222" stroke-width="0.8"/><path d="M3 13l4-1.5 3 1.5M4 8h7" stroke="#222" stroke-width="0.8" fill="none"/></svg>
<span id="t31" class="t" style="left:66.3px;top:346.84px;line-height:20px;font-size:12px;color:#000;letter-spacing:0.212px;">InstaSPINWatch.js</span>
<svg style="left:46.3px;top:369.6px;" width="14.4" height="14.4" viewBox="0 0 16 16"><path d="M2.5 0.5h7.5l3.5 3.5v11.5h-11z" fill="#fdfdfd" stroke="#9a8a6a"/><path d="M10 0.5v3.5h3.5z" fill="#f0d98a" stroke="#b08a2e" stroke-width="0.8"/><path d="M4.5 6.5h5v3h-3v4h5.5" fill="none" stroke="#222" stroke-width="1.2"/><path d="M7 5v5" stroke="#222" stroke-width="1.2"/></svg>
<span id="t32" class="t" style="left:66.3px;top:366.84px;line-height:20px;font-size:12px;color:#000;letter-spacing:0.043px;">TMS570_XDS100V2.ccxml</span>
<svg style="left:46.3px;top:389.6px;" width="14.4" height="14.4" viewBox="0 0 16 16"><path d="M2.5 0.5h7.5l3.5 3.5v11.5h-11z" fill="#fdfdfd" stroke="#9a8a6a"/><path d="M10 0.5v3.5h3.5z" fill="#f0d98a" stroke="#b08a2e" stroke-width="0.8"/><path d="M4.5 6.5h5v3h-3v4h5.5" fill="none" stroke="#222" stroke-width="1.2"/><path d="M7 5v5" stroke="#222" stroke-width="1.2"/></svg>
<span id="t33" class="t" style="left:66.3px;top:386.84px;line-height:20px;font-size:12px;color:#000;letter-spacing:0.087px;">TMS570LS1227.ccxml</span>
<span id="t34" class="t" style="left:193.5px;top:386.84px;line-height:20px;font-size:12px;color:#b5964d;letter-spacing:0.143px;">[Active]</span>
<svg style="left:6.5px;top:409.5px;" width="16" height="16" viewBox="0 0 16 16"><path d="M5.4 3.2l4.3 4.3-4.3 4.3" fill="none" stroke="#a6a6a6" stroke-width="1.7"/></svg>
<svg style="left:26.0px;top:409.5px;" width="16" height="16" viewBox="0 0 16 16"><path d="M1 5.5h2l1 1h9.5v2.5h-12.5z" fill="#fbe6a2" stroke="#8a7fb0" stroke-width="0.6"/><path d="M2.5 6.5h10.5v1.6h-10.5z" fill="#fde9a8"/><path d="M4.5 8.2h11.3l-3.4 5.3h-7.9z" fill="#8fbdf2" stroke="#3050c0" stroke-width="0.9"/><path d="M5.5 9.2h8.5" stroke="#d6e8fb" stroke-width="1"/><path d="M7.2 1.4c-1.6-0.6-2.7 0.4-2.7 1.8s1.1 2.4 2.7 1.8M10.6 1.4c-1.6-0.6-2.7 0.4-2.7 1.8s1.1 2.4 2.7 1.8M14.4 1.3c-1.4-0.6-2.6-0.2-2.6 0.7 0 1.3 2.6 0.8 2.6 2.1 0 1-1.4 1.3-2.8 0.7" fill="none" stroke="#1c5a9e" stroke-width="0.95"/><path d="M3.8 8.4l3.5 7.1h-7z" fill="#f9d264" stroke="#c98a1a" stroke-width="0.8" stroke-linejoin="round"/><path d="M3.8 10.6v2.4M3.8 13.7v0.9" stroke="#2a1a00" stroke-width="1.1"/></svg>
<span id="t35" class="t" style="left:47.0px;top:406.84px;line-height:20px;font-size:12px;color:#000;letter-spacing:0.201px;">TMS570LS1227_sensored_speed_smo</span>
<div style="left:423px;top:81px;width:529px;height:213px;border-radius:6px 8px 4px 4px;background:#f0f0f0;box-shadow:0 0 0 1px #e9e9e9 inset"></div>
<div style="left:424px;top:107px;width:527px;height:169px;background:#fff"></div>
<div style="left:423px;top:81px;width:84px;height:26px;background:#fff;border-radius:5px 7px 0 0;border:1px solid #e2e2e2;border-bottom:none"></div>
<svg style="left:428.3px;top:86.4px;" width="16" height="16" viewBox="0 0 16 16"><path d="M5.2 5.2l-4-2.4M6.6 4.2l-1.4-3.8M4.4 7.6l-4 0.2M5.4 10.2l-3 2.4M9.4 4.4l2-3.2M11.4 6.4l3.6-1.6M12 9.2l3.6 1.6M9 12.4l-1.6 3.2M13.4 4.8l1.2 0.8M15.6 10.8l-0.2 1.2" stroke="#1f5f5f" stroke-width="1.1" fill="none"/><ellipse cx="8.4" cy="8.2" rx="3.3" ry="4.5" transform="rotate(-38 8.4 8.2)" fill="#b4d99c" stroke="#1f6a7a" stroke-width="1"/><path d="M6.2 6.4l4.2 4.4" stroke="#6fae5a" stroke-width="1.6"/><path d="M7.2 5.6l3.8 4" stroke="#e4f3d6" stroke-width="0.9"/></svg>
<span id="t36" class="t" style="left:448px;top:84.84px;line-height:20px;font-size:12px;color:#000;letter-spacing:-0.275px;">Debug</span>
<svg style="left:488.0px;top:87.0px;" width="16" height="16" viewBox="0 0 16 16"><path d="M3.5 3.5h2.5l2 2 2-2h2.5v2.5l-2 2 2 2v2.5h-2.5l-2-2-2 2h-2.5v-2.5l2-2-2-2z" fill="#fff" stroke="#505050" stroke-width="1" stroke-linejoin="miter"/></svg>
<svg style="left:854.5px;top:86.0px;" width="16" height="16" viewBox="0 0 16 16"><path d="M0.8 2.4000000000000004L2.4000000000000004 0.8L5.2 3.6L8.0 0.8L9.6 2.4000000000000004L6.800000000000001 5.2L9.6 8.0L8.0 9.6L5.2 6.800000000000001L2.4000000000000004 9.6L0.8 8.0L3.6 5.2Z" fill="#f1f1f1" stroke="#bdbdbd" stroke-width="0.8" stroke-linejoin="round"/><path d="M5 7L7 5L10.2 8.2L13.4 5L15.4 7L12.2 10.2L15.4 13.4L13.4 15.4L10.2 12.2L7 15.4L5 13.4L8.2 10.2Z" fill="#b9b9b9" stroke="#a9a9a9" stroke-width="0.7" stroke-linejoin="round"/></svg>
<svg style="left:883.0px;top:84.0px;" width="16" height="16" viewBox="0 0 16 16"><path d="M3.6 3.5h8.8l-4.4 4.6z" fill="#fff" stroke="#555" stroke-width="1"/></svg>
<svg style="left:903.0px;top:86.0px;" width="16" height="16" viewBox="0 0 16 16"><rect x="3.5" y="3.5" width="9" height="3" fill="#fff" stroke="#5a5a5a"/></svg>
<svg style="left:926.0px;top:86.0px;" width="16" height="16" viewBox="0 0 16 16"><rect x="3.5" y="3.5" width="9" height="9" fill="#fff" stroke="#5a5a5a"/><path d="M3.5 5.5h9" stroke="#5a5a5a" stroke-width="1"/></svg>
<svg style="left:427.5px;top:109.0px;" width="16" height="16" viewBox="0 0 16 16"><path d="M3.8 4.8l4.2 4.3 4.2-4.3" fill="none" stroke="#404040" stroke-width="1.7"/></svg>
<svg style="left:447.0px;top:108.5px;" width="16" height="16" viewBox="0 0 16 16"><path d="M8 0.6l7 3.2v8l-7 3.6-7-3.6v-8z" fill="#e9e9e9" stroke="#9a9a9a" stroke-width="0.7"/><path d="M1 3.8l7 3.2v8.4l-7-3.6z" fill="#d2d2d2"/><path d="M15 3.8l-7 3.2v8.4l7-3.6z" fill="#bdbdbd"/><path d="M1 3.8l7 3.2 7-3.2M8 7v8.4" stroke="#f6f6f6" stroke-width="0.8" fill="none"/><path d="M8 2l2.4 1.2-2.4 1.2-2.4-1.2z" fill="#2e2e2e"/><path d="M3.2 7.6l2.4 1.2v2.6l-2.4-1.2z" fill="#2e2e2e"/><path d="M12.8 7.6l-2.4 1.2v2.6l2.4-1.2z" fill="#2e2e2e"/><path d="M3.4 2.9l1.6 0.8-1.6 0.8M12.6 2.9l-1.6 0.8 1.6 0.8M8 5.2l1.6 0.8-1.6 0.6-1.6-0.6z" fill="#8a8a8a"/><path d="M1.6 5.4l1.2 0.6v1.4l-1.2-0.6zM6 7.6l1.2 0.6v1.4l-1.2-0.6zM1.6 9.8l1.2 0.6v1.4l-1.2-0.6zM6 12l1.2 0.6v1.4l-1.2-0.6zM14.4 5.4l-1.2 0.6v1.4l1.2-0.6zM10 7.6l-1.2 0.6v1.4l1.2-0.6zM14.4 9.8l-1.2 0.6v1.4l1.2-0.6zM10 12l-1.2 0.6v1.4l1.2-0.6z" fill="#7a7a7a"/></svg>
<span id="t37" class="t" style="left:468.4px;top:106.84px;line-height:20px;font-size:12px;color:#000;letter-spacing:0.157px;">TMS570LS1227_instaspin_bldc</span>
<span id="t38" class="t" style="left:646.9px;top:106.84px;line-height:20px;font-size:12px;color:#000;letter-spacing:0.582px;">[Code Composer Studio - Device Debugging]</span>
<div style="left:464px;top:127px;width:395px;height:20px;background:#d9d9d9"></div>
<svg style="left:466.0px;top:129.0px;" width="16" height="16" viewBox="0 0 16 16"><path d="M1.2 7.8l6.6 3.6-6.6 3.6z" fill="#3fae4a" stroke="#2a8f3a" stroke-width="0.6"/><path d="M10.6 1.6l0.9 0.1 0.5 1 1.1-0.3 0.8 0.8-0.3 1.1 1 0.5 0.1 0.9-0.1 0.9-1 0.5 0.3 1.1-0.8 0.8-1.1-0.3-0.5 1-0.9 0.1-0.9-0.1-0.5-1-1.1 0.3-0.8-0.8 0.3-1.1-1-0.5-0.1-0.9 0.1-0.9 1-0.5-0.3-1.1 0.8-0.8 1.1 0.3 0.5-1z" fill="#f4c04a" stroke="#8a5a0a" stroke-width="0.9" stroke-linejoin="round"/><circle cx="10.6" cy="6.3" r="1.5" fill="#fff8e0" stroke="#8a5a0a" stroke-width="0.8"/></svg>
<span id="t39" class="t" style="left:487.1px;top:126.84px;line-height:20px;font-size:12px;color:#000;letter-spacing:0.472px;">Texas Instruments</span>
<span id="t40" class="t" style="left:596.1px;top:126.84px;line-height:20px;font-size:12px;color:#000;letter-spacing:0.298px;">XDS100v2 USB Emulator/CortexR4 (Running)</span>
<div style="left:424px;top:276px;width:527px;height:15px;background:#f0f0f0"></div>
<div style="left:442px;top:276px;width:469px;height:15px;background:#cdcdcd"></div>
<svg style="left:428px;top:278.5px" width="8" height="10" viewBox="0 0 8 10"><path d="M5.8 1.8l-3.4 3.2 3.4 3.2" fill="none" stroke="#606060" stroke-width="2"/></svg>
<svg style="left:939px;top:278.5px" width="8" height="10" viewBox="0 0 8 10"><path d="M2.2 1.8l3.4 3.2-3.4 3.2" fill="none" stroke="#606060" stroke-width="2"/></svg>
<div style="left:957px;top:81px;width:928px;height:213px;border-radius:6px 8px 4px 4px;background:linear-gradient(#b2bad2 0,#b2bad2 1px,#eef1f8 1px,#d8deee 4px,#d8deee 13px,#dbe4f5 14px,#dbe4f5 25px,#b2bad2 25px,#b2bad2 26px,#e3e9f6 26px);box-shadow:0 0 0 1px #aab4cf inset"></div>
<div style="left:959px;top:107px;width:923px;height:169px;background:#fff"></div>
<div style="left:1034px;top:83px;width:1px;height:23px;background:#b2bad2"></div>
<div style="left:1034px;top:81px;width:109px;height:26px;background:#fff;border-radius:5px 7px 0 0;border:1px solid #b2bad2;border-bottom:none"></div>
<svg style="left:962.0px;top:86.5px;" width="16" height="16" viewBox="0 0 16 16"><path d="M2.6 3.2c-2.1 2.6-2.1 6.8 0 9.6M8.4 3.2c2.1 2.6 2.1 6.8 0 9.6" fill="none" stroke="#34496b" stroke-width="1.6"/><path d="M3.6 5.6l3.8 4.8M7.4 5.6l-3.8 4.8" stroke="#34496b" stroke-width="1.1"/><path d="M12 6.7h3.8M12 9.3h3.8" stroke="#34496b" stroke-width="1.1"/></svg>
<span id="t41" class="t" style="left:982px;top:84.84px;line-height:20px;font-size:12px;color:#000;letter-spacing:-0.405px;">Variables</span>
<svg style="left:1038.0px;top:86.0px;" width="16" height="16" viewBox="0 0 16 16"><circle cx="3.8" cy="6.5" r="2.6" fill="none" stroke="#555" stroke-width="1"/><circle cx="10" cy="6.5" r="2.6" fill="none" stroke="#555" stroke-width="1"/><path d="M1.5 5l2-4M12.5 5l2.5-3.5M6.4 6.5h1" stroke="#555" stroke-width="1" fill="none"/><path d="M5 11l3 3M8 11l-3 3" stroke="#2a4a7a" stroke-width="1.1"/><path d="M10 11.5h3.5M10 13.5h3.5" stroke="#2a4a7a" stroke-width="1"/></svg>
<span id="t42" class="t" style="left:1058px;top:84.84px;line-height:20px;font-size:12px;color:#000;letter-spacing:-0.534px;">Expressions</span>
<svg style="left:1123.0px;top:87.0px;" width="16" height="16" viewBox="0 0 16 16"><path d="M3.5 3.5h2.5l2 2 2-2h2.5v2.5l-2 2 2 2v2.5h-2.5l-2-2-2 2h-2.5v-2.5l2-2-2-2z" fill="#fff" stroke="#505050" stroke-width="1" stroke-linejoin="miter"/></svg>
<svg style="left:1554.5px;top:86.0px;" width="16" height="16" viewBox="0 0 16 16"><path d="M2 1l2 6M5.5 1.5c1.5-1 3 0 2 2l-2 3" fill="none" stroke="#b5b5b5" stroke-width="1.1"/><path d="M3.5 6.5h9l2 2v6h-13v-6z" fill="#f3f3f3" stroke="#b9b9b9"/><path d="M4 12.5h1.2M6.4 12.5h1.2M8.8 12.5h1.2" stroke="#b0b0b0" stroke-width="1.1"/></svg>
<svg style="left:1578.0px;top:86.0px;" width="16" height="16" viewBox="0 0 16 16"><path d="M0.5 6.5h4v-2l3.5 3.5-3.5 3.5v-2h-4z" fill="#fbe08a" stroke="#b8872a" stroke-width="0.8"/><path d="M10 1v13M10 4.5h2M10 9h2M10 13.5h2" stroke="#3a5a9a" stroke-width="1"/><rect x="12" y="3" width="3" height="3" fill="#f0b0b0" stroke="#c03a3a" stroke-width="0.8"/><rect x="12" y="7.5" width="3" height="3" fill="#f0b0b0" stroke="#c03a3a" stroke-width="0.8"/><rect x="12" y="12" width="3" height="3" fill="#f0b0b0" stroke="#c03a3a" stroke-width="0.8"/><rect x="8.5" y="0" width="3" height="2.5" fill="#dfe8f8" stroke="#3a5a9a" stroke-width="0.7"/></svg>
<svg style="left:1602.0px;top:86.0px;" width="16" height="16" viewBox="0 0 16 16"><rect x="1.5" y="2.5" width="10" height="10" fill="#e9f2fb" stroke="#b0bad0"/><rect x="3.5" y="4.5" width="10" height="10" fill="#fafdff" stroke="#98a2bc"/><path d="M5.5 10h6" stroke="#0f4a8a" stroke-width="1.6"/></svg>
<div style="left:1623px;top:85px;width:1px;height:19px;background:#8c8c8c"></div>
<svg style="left:1632.0px;top:86.0px;" width="16" height="16" viewBox="0 0 16 16"><path d="M6.2 2.5h3.6v3.7h3.7v3.6h-3.7v3.7h-3.6v-3.7h-3.7v-3.6h3.7z" fill="#a6d44e" stroke="#5f9f22" stroke-width="1" stroke-linejoin="round"/><path d="M7.2 3.6h1.6M3.6 7.2h3" stroke="#dff2b8" stroke-width="1"/></svg>
<svg style="left:1655.0px;top:86.0px;" width="16" height="16" viewBox="0 0 16 16"><path d="M2.2 4.300000000000001L4.300000000000001 2.2L8.0 5.9L11.700000000000001 2.2L13.8 4.300000000000001L10.1 8.0L13.8 11.700000000000001L11.700000000000001 13.8L8.0 10.1L4.300000000000001 13.8L2.2 11.700000000000001L5.9 8.0Z" fill="#6e6e6e" stroke="#575757" stroke-width="0.7" stroke-linejoin="round"/></svg>
<svg style="left:1678.5px;top:86.0px;" width="16" height="16" viewBox="0 0 16 16"><path d="M0.8 2.4000000000000004L2.4000000000000004 0.8L5.2 3.6L8.0 0.8L9.6 2.4000000000000004L6.800000000000001 5.2L9.6 8.0L8.0 9.6L5.2 6.800000000000001L2.4000000000000004 9.6L0.8 8.0L3.6 5.2Z" fill="#d2d2d2" stroke="#7d7d7d" stroke-width="0.8" stroke-linejoin="round"/><path d="M5 7L7 5L10.2 8.2L13.4 5L15.4 7L12.2 10.2L15.4 13.4L13.4 15.4L10.2 12.2L7 15.4L5 13.4L8.2 10.2Z" fill="#757575" stroke="#5c5c5c" stroke-width="0.7" stroke-linejoin="round"/></svg>
<div style="left:1698px;top:83px;width:23px;height:22px;background:#cce4f7;box-shadow:0 0 0 1px #84bdf0 inset"></div>
<svg style="left:1701.5px;top:86.0px;" width="16" height="16" viewBox="0 0 16 16"><path d="M3.2 1.5h3v7.5h2l-3.5 4-3.5-4h2z" fill="#fbe08a" stroke="#c08a1a" stroke-width="0.9" stroke-linejoin="round"/><path d="M8.2 14.5v-7.5c0-1.2 0.5-2 1.6-2.4l-1.2-1.4 5-1.2 0.6 4.6-1.6-0.6c-0.8 0.2-1.2 0.6-1.2 1.4v7.1z" fill="#fbe08a" stroke="#c08a1a" stroke-width="0.9" stroke-linejoin="round"/><path d="M4.2 2.5v7M9.2 13.5v-6.5" stroke="#fff6d0" stroke-width="0.9"/></svg>
<div style="left:1723px;top:85px;width:1px;height:19px;background:#8c8c8c"></div>
<svg style="left:1732.0px;top:86.0px;" width="16" height="16" viewBox="0 0 16 16"><defs><linearGradient id="gnv90" x1="0" y1="0" x2="1" y2="1"><stop offset="0" stop-color="#cfe3f7"/><stop offset="1" stop-color="#ffffff"/></linearGradient></defs><rect x="1" y="3.500" width="13" height="11" fill="url(#gnv90)" stroke="#b3975a"/><rect x="1" y="3.500" width="9" height="2.200" fill="#3f7fd0"/><path d="M12.500 7.500c0 4-3 6.500-7.500 7" fill="none" stroke="#f7d56a" stroke-width="1.100"/><path d="M12 0.800l1.100 2.300 2.300 1.100-2.300 1.100-1.100 2.300-1.100-2.300-2.300-1.100 2.300-1.100z" fill="#fff3c0" stroke="#c59a22" stroke-width="0.900"/></svg>
<svg style="left:1756.0px;top:86.0px;" width="16" height="16" viewBox="0 0 16 16"><rect x="1.500" y="5.500" width="11" height="9" fill="#f4f9fe" stroke="#7a8aaa"/><rect x="2" y="6" width="8" height="2" fill="#3f7fd0"/><path d="M7 10.500l3.500-3.500" stroke="#1a4a7a" stroke-width="1"/><path d="M10.500 2.500l3.500 3.500-1.200 1.200-1-0.200-1.800 1.300-1.500-1.500 1.300-1.800-0.200-1z" fill="#a8a8a8" stroke="#707070" stroke-width="0.800"/><path d="M12.200 1.300l2.600 2.600" stroke="#707070" stroke-width="2.200"/><path d="M12.200 1.300l2.600 2.600" stroke="#c8c8c8" stroke-width="1"/></svg>
<div style="left:1777px;top:85px;width:1px;height:19px;background:#8c8c8c"></div>
<svg style="left:1786.0px;top:86.0px;" width="16" height="16" viewBox="0 0 16 16"><g transform="translate(8 8) rotate(35) scale(1.28) translate(-8 -8)"><path d="M2 8c0-4 4-6 7.5-4l1-1.8 2 4.8-5 0.2 1-1.6c-2-1-4.3 0-4.5 2.4z" fill="#fbd04a" stroke="#a87a1a" stroke-width="0.8" stroke-linejoin="round"/><path d="M14 8c0 4-4 6-7.5 4l-1 1.8-2-4.8 5-0.2-1 1.6c2 1 4.3 0 4.5-2.4z" fill="#fbd04a" stroke="#a87a1a" stroke-width="0.8" stroke-linejoin="round"/></g></svg>
<svg style="left:1815.0px;top:84.0px;" width="16" height="16" viewBox="0 0 16 16"><path d="M3.6 3.5h8.8l-4.4 4.6z" fill="#fff" stroke="#555" stroke-width="1"/></svg>
<svg style="left:1835.0px;top:86.0px;" width="16" height="16" viewBox="0 0 16 16"><rect x="3.5" y="3.5" width="9" height="3" fill="#fff" stroke="#5a5a5a"/></svg>
<svg style="left:1858.0px;top:86.0px;" width="16" height="16" viewBox="0 0 16 16"><rect x="3.5" y="3.5" width="9" height="9" fill="#fff" stroke="#5a5a5a"/><path d="M3.5 5.5h9" stroke="#5a5a5a" stroke-width="1"/></svg>
<span id="t43" class="t" style="left:965.5px;top:108.84px;line-height:20px;font-size:12px;color:#000;letter-spacing:0.263px;">Expression</span>
<span id="t44" class="t" style="left:1157px;top:108.84px;line-height:20px;font-size:12px;color:#000;letter-spacing:0.371px;">Type</span>
<span id="t45" class="t" style="left:1338px;top:108.84px;line-height:20px;font-size:12px;color:#000;letter-spacing:0.338px;">Value</span>
<span id="t46" class="t" style="left:1782.5px;top:108.84px;line-height:20px;font-size:12px;color:#000;letter-spacing:0.424px;">Address</span>
<svg style="left:981.5px;top:132.5px;" width="16" height="16" viewBox="0 0 16 16"><path d="M2.6 3.2c-2.1 2.6-2.1 6.8 0 9.6M8.4 3.2c2.1 2.6 2.1 6.8 0 9.6" fill="none" stroke="#34496b" stroke-width="1.6"/><path d="M3.6 5.6l3.8 4.8M7.4 5.6l-3.8 4.8" stroke="#34496b" stroke-width="1.1"/><path d="M12 6.7h3.8M12 9.3h3.8" stroke="#34496b" stroke-width="1.1"/></svg>
<span id="t47" class="t" style="left:1002.5px;top:130.84px;line-height:20px;font-size:12px;color:#000;letter-spacing:0.320px;">gGUIObj.EnableFlg</span>
<span id="t48" class="t" style="left:1156.5px;top:130.84px;line-height:20px;font-size:12px;color:#000;letter-spacing:0.493px;">unknown</span>
<span id="t49" class="t" style="left:1337.5px;top:130.84px;line-height:20px;font-size:12px;color:#ff0000;letter-spacing:0.559px;">Error: Could</span>
<span id="t50" class="t" style="left:1412.5px;top:130.84px;line-height:20px;font-size:12px;color:#ff0000;letter-spacing:1.004px;">not</span>
<span id="t51" class="t" style="left:1435.8px;top:130.84px;line-height:20px;font-size:12px;color:#ff0000;letter-spacing:0.692px;">read</span>
<span id="t52" class="t" style="left:1466.2px;top:130.84px;line-height:20px;font-size:12px;color:#ff0000;letter-spacing:0.288px;">0x080027B0:</span>
<span id="t53" class="t" style="left:1543.7px;top:130.84px;line-height:20px;font-size:12px;color:#ff0000;letter-spacing:0.355px;">Execution state prevented access</span>
<svg style="left:981.5px;top:152.5px;" width="16" height="16" viewBox="0 0 16 16"><path d="M2.6 3.2c-2.1 2.6-2.1 6.8 0 9.6M8.4 3.2c2.1 2.6 2.1 6.8 0 9.6" fill="none" stroke="#34496b" stroke-width="1.6"/><path d="M3.6 5.6l3.8 4.8M7.4 5.6l-3.8 4.8" stroke="#34496b" stroke-width="1.1"/><path d="M12 6.7h3.8M12 9.3h3.8" stroke="#34496b" stroke-width="1.1"/></svg>
<span id="t54" class="t" style="left:1002.5px;top:150.84px;line-height:20px;font-size:12px;color:#000;letter-spacing:0.401px;">gDRVObj.isrTicker</span>
<span id="t55" class="t" style="left:1156.5px;top:150.84px;line-height:20px;font-size:12px;color:#000;letter-spacing:0.493px;">unknown</span>
<span id="t56" class="t" style="left:1337.5px;top:150.84px;line-height:20px;font-size:12px;color:#ff0000;letter-spacing:0.553px;">Error: identifier</span>
<span id="t57" class="t" style="left:1429.2px;top:150.84px;line-height:20px;font-size:12px;color:#ff0000;letter-spacing:0.871px;">not</span>
<span id="t58" class="t" style="left:1452.1px;top:150.84px;line-height:20px;font-size:12px;color:#ff0000;letter-spacing:0.704px;">found:</span>
<span id="t59" class="t" style="left:1493.3px;top:150.84px;line-height:20px;font-size:12px;color:#ff0000;letter-spacing:0.547px;">gDRVObj</span>
<span id="t60" class="t" style="left:1551.2px;top:150.84px;line-height:20px;font-size:12px;color:#ff0000;letter-spacing:0.399px;">at (gDRVObj).isrTicker</span>
<svg style="left:981.5px;top:172.5px;" width="16" height="16" viewBox="0 0 16 16"><path d="M2.6 3.2c-2.1 2.6-2.1 6.8 0 9.6M8.4 3.2c2.1 2.6 2.1 6.8 0 9.6" fill="none" stroke="#34496b" stroke-width="1.6"/><path d="M3.6 5.6l3.8 4.8M7.4 5.6l-3.8 4.8" stroke="#34496b" stroke-width="1.1"/><path d="M12 6.7h3.8M12 9.3h3.8" stroke="#34496b" stroke-width="1.1"/></svg>
<span id="t61" class="t" style="left:1002.5px;top:170.84px;line-height:20px;font-size:12px;color:#000;letter-spacing:0.379px;">gGUIObj.LogScalar</span>
<span id="t62" class="t" style="left:1156.5px;top:170.84px;line-height:20px;font-size:12px;color:#000;letter-spacing:0.493px;">unknown</span>
<span id="t63" class="t" style="left:1337.5px;top:170.84px;line-height:20px;font-size:12px;color:#ff0000;letter-spacing:0.559px;">Error: Could</span>
<span id="t64" class="t" style="left:1412.5px;top:170.84px;line-height:20px;font-size:12px;color:#ff0000;letter-spacing:1.004px;">not</span>
<span id="t65" class="t" style="left:1435.8px;top:170.84px;line-height:20px;font-size:12px;color:#ff0000;letter-spacing:0.692px;">read</span>
<span id="t66" class="t" style="left:1466.2px;top:170.84px;line-height:20px;font-size:12px;color:#ff0000;letter-spacing:0.288px;">0x080027B6:</span>
<span id="t67" class="t" style="left:1543.7px;top:170.84px;line-height:20px;font-size:12px;color:#ff0000;letter-spacing:0.355px;">Execution state prevented access</span>
<svg style="left:981.5px;top:192.5px;" width="16" height="16" viewBox="0 0 16 16"><path d="M2.6 3.2c-2.1 2.6-2.1 6.8 0 9.6M8.4 3.2c2.1 2.6 2.1 6.8 0 9.6" fill="none" stroke="#34496b" stroke-width="1.6"/><path d="M3.6 5.6l3.8 4.8M7.4 5.6l-3.8 4.8" stroke="#34496b" stroke-width="1.1"/><path d="M12 6.7h3.8M12 9.3h3.8" stroke="#34496b" stroke-width="1.1"/></svg>
<span id="t68" class="t" style="left:1002.5px;top:190.84px;line-height:20px;font-size:12px;color:#000;letter-spacing:0.716px;">gGUIObj.SpdMotor</span>
<span id="t69" class="t" style="left:1156.5px;top:190.84px;line-height:20px;font-size:12px;color:#000;letter-spacing:0.493px;">unknown</span>
<span id="t70" class="t" style="left:1337.5px;top:190.84px;line-height:20px;font-size:12px;color:#ff0000;letter-spacing:0.559px;">Error: Could</span>
<span id="t71" class="t" style="left:1412.5px;top:190.84px;line-height:20px;font-size:12px;color:#ff0000;letter-spacing:1.004px;">not</span>
<span id="t72" class="t" style="left:1435.8px;top:190.84px;line-height:20px;font-size:12px;color:#ff0000;letter-spacing:0.692px;">read</span>
<span id="t73" class="t" style="left:1466.2px;top:190.84px;line-height:20px;font-size:12px;color:#ff0000;letter-spacing:0.228px;">0x0800278C:</span>
<span id="t74" class="t" style="left:1543.7px;top:190.84px;line-height:20px;font-size:12px;color:#ff0000;letter-spacing:0.355px;">Execution state prevented access</span>
<svg style="left:981.5px;top:212.5px;" width="16" height="16" viewBox="0 0 16 16"><path d="M2.6 3.2c-2.1 2.6-2.1 6.8 0 9.6M8.4 3.2c2.1 2.6 2.1 6.8 0 9.6" fill="none" stroke="#34496b" stroke-width="1.6"/><path d="M3.6 5.6l3.8 4.8M7.4 5.6l-3.8 4.8" stroke="#34496b" stroke-width="1.1"/><path d="M12 6.7h3.8M12 9.3h3.8" stroke="#34496b" stroke-width="1.1"/></svg>
<span id="t75" class="t" style="left:1002.5px;top:210.84px;line-height:20px;font-size:12px;color:#000;letter-spacing:0.382px;">gGUIObj.SpeedRPM</span>
<span id="t76" class="t" style="left:1156.5px;top:210.84px;line-height:20px;font-size:12px;color:#000;letter-spacing:0.493px;">unknown</span>
<span id="t77" class="t" style="left:1337.5px;top:210.84px;line-height:20px;font-size:12px;color:#ff0000;letter-spacing:0.559px;">Error: Could</span>
<span id="t78" class="t" style="left:1412.5px;top:210.84px;line-height:20px;font-size:12px;color:#ff0000;letter-spacing:1.004px;">not</span>
<span id="t79" class="t" style="left:1435.8px;top:210.84px;line-height:20px;font-size:12px;color:#ff0000;letter-spacing:0.692px;">read</span>
<span id="t80" class="t" style="left:1466.2px;top:210.84px;line-height:20px;font-size:12px;color:#ff0000;letter-spacing:0.206px;">0x080027E0:</span>
<span id="t81" class="t" style="left:1542.8px;top:210.84px;line-height:20px;font-size:12px;color:#ff0000;letter-spacing:0.352px;">Execution state prevented access</span>
<div style="left:959px;top:230px;width:908px;height:21px;background:#cce8ff"></div>
<svg style="left:981.5px;top:232.5px;" width="16" height="16" viewBox="0 0 16 16"><path d="M2.6 3.2c-2.1 2.6-2.1 6.8 0 9.6M8.4 3.2c2.1 2.6 2.1 6.8 0 9.6" fill="none" stroke="#34496b" stroke-width="1.6"/><path d="M3.6 5.6l3.8 4.8M7.4 5.6l-3.8 4.8" stroke="#34496b" stroke-width="1.1"/><path d="M12 6.7h3.8M12 9.3h3.8" stroke="#34496b" stroke-width="1.1"/></svg>
<span id="t82" class="t" style="left:1002.5px;top:230.84px;line-height:20px;font-size:12px;color:#000;letter-spacing:0.322px;">gGUIObj.DFuncStartup</span>
<span id="t83" class="t" style="left:1156.5px;top:230.84px;line-height:20px;font-size:12px;color:#000;letter-spacing:0.493px;">unknown</span>
<span id="t84" class="t" style="left:1337.5px;top:230.84px;line-height:20px;font-size:12px;color:#000;letter-spacing:0.559px;">Error: Could</span>
<span id="t85" class="t" style="left:1412.5px;top:230.84px;line-height:20px;font-size:12px;color:#000;letter-spacing:1.004px;">not</span>
<span id="t86" class="t" style="left:1435.8px;top:230.84px;line-height:20px;font-size:12px;color:#000;letter-spacing:0.692px;">read</span>
<span id="t87" class="t" style="left:1466.2px;top:230.84px;line-height:20px;font-size:12px;color:#000;letter-spacing:0.206px;">0x080027E8:</span>
<span id="t88" class="t" style="left:1542.8px;top:230.84px;line-height:20px;font-size:12px;color:#000;letter-spacing:0.352px;">Execution state prevented access</span>
<div style="left:959px;top:251px;width:908px;height:20px;background:#e5f3ff"></div>
<svg style="left:981.5px;top:252.5px;" width="16" height="16" viewBox="0 0 16 16"><path d="M2.6 3.2c-2.1 2.6-2.1 6.8 0 9.6M8.4 3.2c2.1 2.6 2.1 6.8 0 9.6" fill="none" stroke="#34496b" stroke-width="1.6"/><path d="M3.6 5.6l3.8 4.8M7.4 5.6l-3.8 4.8" stroke="#34496b" stroke-width="1.1"/><path d="M12 6.7h3.8M12 9.3h3.8" stroke="#34496b" stroke-width="1.1"/></svg>
<div style="left:1002px;top:251px;width:148px;height:20px;overflow:hidden">
<span id="t89" class="t" style="left:0.5px;top:-0.16px;line-height:20px;font-size:12px;color:#000;letter-spacing:0.466px;">gDRVObj.instaHandle-&gt;value</span>
</div>
<span id="t90" class="t" style="left:1156.5px;top:250.84px;line-height:20px;font-size:12px;color:#000;letter-spacing:0.493px;">unknown</span>
<span id="t91" class="t" style="left:1337.5px;top:250.84px;line-height:20px;font-size:12px;color:#ff0000;letter-spacing:0.553px;">Error: identifier</span>
<span id="t92" class="t" style="left:1429.2px;top:250.84px;line-height:20px;font-size:12px;color:#ff0000;letter-spacing:0.871px;">not</span>
<span id="t93" class="t" style="left:1452.1px;top:250.84px;line-height:20px;font-size:12px;color:#ff0000;letter-spacing:0.704px;">found:</span>
<span id="t94" class="t" style="left:1493.3px;top:250.84px;line-height:20px;font-size:12px;color:#ff0000;letter-spacing:0.547px;">gDRVObj</span>
<span id="t95" class="t" style="left:1551.2px;top:250.84px;line-height:20px;font-size:12px;color:#ff0000;letter-spacing:0.387px;">at (gDRVObj).instaHandle</span>
<div style="left:959px;top:150px;width:908px;height:1px;background:#ededed"></div>
<div style="left:959px;top:170px;width:908px;height:1px;background:#ededed"></div>
<div style="left:959px;top:190px;width:908px;height:1px;background:#ededed"></div>
<div style="left:959px;top:210px;width:908px;height:1px;background:#ededed"></div>
<div style="left:959px;top:230px;width:908px;height:1px;background:#ededed"></div>
<div style="left:959px;top:250px;width:908px;height:1px;background:#ededed"></div>
<div style="left:959px;top:270px;width:908px;height:1px;background:#ededed"></div>
<div style="left:1150px;top:107px;width:1px;height:168px;background:#e6e6e6"></div>
<div style="left:1331px;top:107px;width:1px;height:168px;background:#e6e6e6"></div>
<div style="left:1775px;top:107px;width:1px;height:168px;background:#e6e6e6"></div>
<div style="left:1866.5px;top:107px;width:15px;height:169px;background:#f0f0f0"></div>
<div style="left:1866.5px;top:124px;width:15px;height:59px;background:#cdcdcd"></div>
<svg style="left:1869.0px;top:111px" width="10" height="8" viewBox="0 0 10 8"><path d="M1.6 6l3.4-3.2 3.4 3.2" fill="none" stroke="#606060" stroke-width="2"/></svg>
<svg style="left:1869.0px;top:264px" width="10" height="8" viewBox="0 0 10 8"><path d="M1.6 2l3.4 3.2 3.4-3.2" fill="none" stroke="#606060" stroke-width="2"/></svg>
<div style="left:959px;top:276px;width:908px;height:15px;background:#f0f0f0"></div>
<div style="left:976px;top:276px;width:785px;height:15px;background:#cdcdcd"></div>
<svg style="left:963px;top:278.5px" width="8" height="10" viewBox="0 0 8 10"><path d="M5.8 1.8l-3.4 3.2 3.4 3.2" fill="none" stroke="#606060" stroke-width="2"/></svg>
<svg style="left:1855px;top:278.5px" width="8" height="10" viewBox="0 0 8 10"><path d="M2.2 1.8l3.4 3.2-3.4 3.2" fill="none" stroke="#606060" stroke-width="2"/></svg>
<div style="left:959px;top:276px;width:923px;height:16px;background:#f0f0f0"></div>
<div style="left:959px;top:276px;width:908px;height:15px;background:#f0f0f0"></div>
<div style="left:976px;top:276px;width:785px;height:15px;background:#cdcdcd"></div>
<svg style="left:963px;top:278.5px" width="8" height="10" viewBox="0 0 8 10"><path d="M5.8 1.8l-3.4 3.2 3.4 3.2" fill="none" stroke="#606060" stroke-width="2"/></svg>
<svg style="left:1855px;top:278.5px" width="8" height="10" viewBox="0 0 8 10"><path d="M2.2 1.8l3.4 3.2-3.4 3.2" fill="none" stroke="#606060" stroke-width="2"/></svg>
<div style="left:1887px;top:81px;width:33px;height:81px;background:#ece9d8;border-radius:3px 3px 7px 7px;box-shadow:0 0 0 1px #d6d1b8 inset, 0 0 0 2px #fff inset"></div>
<div style="left:1891px;top:91px;width:26px;height:66px;background:#e9e9e9;border-radius:3px"></div>
<div style="left:1896px;top:87px;width:2px;height:2px;background:#fff"></div>
<div style="left:1896px;top:87px;width:1px;height:1px;background:#9a9a8a"></div>
<div style="left:1900px;top:87px;width:2px;height:2px;background:#fff"></div>
<div style="left:1900px;top:87px;width:1px;height:1px;background:#9a9a8a"></div>
<div style="left:1904px;top:87px;width:2px;height:2px;background:#fff"></div>
<div style="left:1904px;top:87px;width:1px;height:1px;background:#9a9a8a"></div>
<div style="left:1908px;top:87px;width:2px;height:2px;background:#fff"></div>
<div style="left:1908px;top:87px;width:1px;height:1px;background:#9a9a8a"></div>
<svg style="left:1896.5px;top:95.5px;" width="13" height="13" viewBox="0 0 16 16"><rect x="6.5" y="3.5" width="6" height="5" fill="#fff" stroke="#555"/><path d="M6.5 4.5h6" stroke="#555" stroke-width="1.6"/><rect x="3.5" y="7.5" width="6" height="5" fill="#fff" stroke="#555"/><path d="M3.5 8.5h6" stroke="#555" stroke-width="1.6"/></svg>
<svg style="left:1895.0px;top:116.0px;" width="16" height="16" viewBox="0 0 16 16"><path d="M2 2c2-2 5-1 4 2l-2 5c-1 3 1 5 3 3" fill="none" stroke="#777" stroke-width="1.2"/><rect x="6.5" y="3.5" width="9" height="8" fill="#e9e9e9" stroke="#555"/><rect x="8.5" y="5.5" width="5" height="4" fill="#fff" stroke="#555" stroke-width="0.9"/><path d="M9.5 7.5h3" stroke="#555"/><circle cx="4.5" cy="13" r="1.6" fill="#ddd" stroke="#666" stroke-width="0.8"/></svg>
<svg style="left:1894.5px;top:137.5px;" width="17" height="17" viewBox="0 0 16 16"><path d="M0.600 15.400l3.200-6.600 4.600 4.200z" fill="#fff6c8" stroke="#e8b830" stroke-width="0.8" stroke-linejoin="round"/><path d="M3.800 8.800l2.800-3.200 4.400 4.200-2.600 3.200z" fill="#9a98a6" stroke="#6a6a74" stroke-width="0.7"/><path d="M6.600 5.600l4.600-4.800 3.800 1-0.200 5-3.800 3z" fill="#f6c86a" stroke="#b8801a" stroke-width="0.9" stroke-linejoin="round"/><path d="M9.200 4.400l3-3" stroke="#fde6a8" stroke-width="1"/><circle cx="12.400" cy="3.600" r="0.800" fill="#2a5a9a"/></svg>
<div style="left:423px;top:298px;width:1461px;height:500px;border-radius:6px 8px 4px 4px;background:#f0f0f0;box-shadow:0 0 0 1px #e9e9e9 inset"></div>
<div style="left:423px;top:298px;width:105px;height:26px;background:#fff;border-radius:5px 7px 0 0;border:1px solid #e2e2e2;border-bottom:none"></div>
<svg style="left:429.0px;top:304.5px;" width="15" height="15" viewBox="0 0 16 16"><path d="M2.5 0.5h7.5l3.5 3.5v11.5h-11z" fill="#f4f8fd" stroke="#a8842e"/><path d="M10 0.5v3.5h3.5z" fill="#e6c35a" stroke="#a8842e" stroke-width="0.8"/><circle cx="4.4" cy="12.2" r="0.9" fill="#1f5fa0"/><path d="M11.4 8.3c-2.6-1.4-4.9-0.1-4.9 2s2.3 3.4 4.9 2" fill="none" stroke="#1f5fa0" stroke-width="1.9"/></svg>
<span id="t96" class="t" style="left:447.5px;top:301.84px;line-height:20px;font-size:12px;color:#000;letter-spacing:-0.353px;">sys_main.c</span>
<svg style="left:509.0px;top:304.0px;" width="16" height="16" viewBox="0 0 16 16"><path d="M3.5 3.5h2.5l2 2 2-2h2.5v2.5l-2 2 2 2v2.5h-2.5l-2-2-2 2h-2.5v-2.5l2-2-2-2z" fill="#fff" stroke="#505050" stroke-width="1" stroke-linejoin="miter"/></svg>
<svg style="left:1835.0px;top:303.0px;" width="16" height="16" viewBox="0 0 16 16"><rect x="3.5" y="3.5" width="9" height="3" fill="#fff" stroke="#5a5a5a"/></svg>
<svg style="left:1858.0px;top:303.0px;" width="16" height="16" viewBox="0 0 16 16"><rect x="3.5" y="3.5" width="9" height="9" fill="#fff" stroke="#5a5a5a"/><path d="M3.5 5.5h9" stroke="#5a5a5a" stroke-width="1"/></svg>
<div style="left:424px;top:324px;width:1459px;height:473px;background:#f8f8f8"></div>
<div style="left:424px;top:324px;width:1430px;height:457px;background:#fff"></div>
<div style="left:425px;top:324px;width:12px;height:456px;background:#9cc7f4;background-image:repeating-conic-gradient(#4f9bf0 0 25%,#e6f1fd 0 50%);background-size:2px 2px"></div>
<div style="left:461px;top:523px;width:1392px;height:15px;background:#e8f2fe"></div>
<div style="left:425px;top:324px;width:1430px;height:456px;overflow:hidden"><pre style="left:12px;top:-8.80px;line-height:15px;color:#787878;font-family:'Liberation Mono', monospace;font-size:12.4px;letter-spacing:-0.4412px;-webkit-text-stroke:0.1px;">129
130
131
132
133
134
135
136
137
138
139
140
141
142
143
144
145
146
147
148
149
150
151
152
153
154
155
156
157
158
159</pre><pre style="left:36px;top:-8.80px;line-height:15px;color:#000;font-family:'Liberation Mono', monospace;font-size:12.4px;letter-spacing:-0.4412px;-webkit-text-stroke:0.1px;"> 
<span style="color:#3f7f5f">    // initialize the graph module (data logger)</span>
    graph.<span style="color:#0000c0">ch1Ptr</span> = &amp;DlogCh1;
    graph.<span style="color:#0000c0">ch2Ptr</span> = &amp;DlogCh2;
    graph.<span style="color:#0000c0">ch3Ptr</span> = &amp;DlogCh3;
    graph.<span style="color:#0000c0">ch4Ptr</span> = &amp;DlogCh4;
    graph.<span style="color:#0000c0">trigValue</span> = 0.0;
    graph.<span style="color:#0000c0">size</span> = 0x00FF;
    graph.<span style="color:#0000c0">holdoff</span> = 3;
    graph.<span style="color:#0000c0">prescalar</span> = 5;
    Graph_Data_Init(graphHandle);

<span style="color:#3f7f5f">    // initialize the gui</span>

    GUI_setup(guiHandle, drvHandle, graphHandle);

<span style="color:#3f7f5f">    // Send SPI commands to DRV8301 to set it up</span>
    spiREG3-&gt;<span style="color:#0000c0">DAT1</span> = 0x13D0;
<b style="color:#7f0055;-webkit-text-stroke:0">    while</b>((spiREG3-&gt;<span style="color:#0000c0">FLG</span> &amp; 0x100)!=0x100);
    drv.<span style="color:#0000c0">SPI3_RXDATA</span>[0] = (spiREG3-&gt;<span style="color:#0000c0">BUF</span>) &amp; 0xFF;

    spiREG3-&gt;<span style="color:#0000c0">DAT1</span> = 0x8000;
<b style="color:#7f0055;-webkit-text-stroke:0">    while</b>((spiREG3-&gt;<span style="color:#0000c0">FLG</span> &amp; 0x100)!=0x100);
    drv.<span style="color:#0000c0">SPI3_RXDATA</span>[1] = (spiREG3-&gt;<span style="color:#0000c0">BUF</span>) &amp; 0xFF;

    spiREG3-&gt;<span style="color:#0000c0">DAT1</span> = 0x180D;
<b style="color:#7f0055;-webkit-text-stroke:0">    while</b>((spiREG3-&gt;<span style="color:#0000c0">FLG</span> &amp; 0x100)!=0x100);
    drv.<span style="color:#0000c0">SPI3_RXDATA</span>[2] = (spiREG3-&gt;<span style="color:#0000c0">BUF</span>) &amp; 0xFF;

    spiREG3-&gt;<span style="color:#0000c0">DAT1</span> = 0x8000;
<b style="color:#7f0055;-webkit-text-stroke:0">    while</b>((spiREG3-&gt;<span style="color:#0000c0">FLG</span> &amp; 0x100)!=0x100);</pre></div>
<div style="left:424px;top:781px;width:1445px;height:16px;background:#f0f0f0"></div>
<div style="left:424px;top:781px;width:35px;height:16px;background:#f8f8f8"></div>
<div style="left:1854px;top:324px;width:15px;height:457px;background:#f0f0f0"></div>
<div style="left:1854px;top:525px;width:15px;height:43px;background:#cdcdcd"></div>
<svg style="left:1856.5px;top:328px" width="10" height="8" viewBox="0 0 10 8"><path d="M1.6 6l3.4-3.2 3.4 3.2" fill="none" stroke="#606060" stroke-width="2"/></svg>
<svg style="left:1856.5px;top:769px" width="10" height="8" viewBox="0 0 10 8"><path d="M1.6 2l3.4 3.2 3.4-3.2" fill="none" stroke="#606060" stroke-width="2"/></svg>
<div style="left:461px;top:781px;width:1393px;height:16px;background:#f0f0f0"></div>
<svg style="left:465px;top:784.0px" width="8" height="10" viewBox="0 0 8 10"><path d="M5.8 1.8l-3.4 3.2 3.4 3.2" fill="none" stroke="#bdbdbd" stroke-width="2"/></svg>
<svg style="left:1842px;top:784.0px" width="8" height="10" viewBox="0 0 8 10"><path d="M2.2 1.8l3.4 3.2-3.4 3.2" fill="none" stroke="#bdbdbd" stroke-width="2"/></svg>
<div style="left:423px;top:803px;width:1461px;height:208px;border-radius:6px 8px 4px 4px;background:#f0f0f0;box-shadow:0 0 0 1px #e9e9e9 inset"></div>
<div style="left:423px;top:803px;width:92px;height:26px;background:#fff;border-radius:5px 7px 0 0;border:1px solid #e2e2e2;border-bottom:none"></div>
<svg style="left:428.5px;top:809.5px;" width="15" height="15" viewBox="0 0 16 16"><rect x="2" y="1.5" width="12" height="9.5" rx="0.8" fill="#e4eefb" stroke="#2b5fae" stroke-width="2"/><path d="M5 4.8h5.5M5 7h3.5" stroke="#2b5fae" stroke-width="1"/><path d="M6.5 12v1.5M9.5 12v1.5" stroke="#2b5fae" stroke-width="1.4"/><path d="M3.5 14.3h9" stroke="#2b5fae" stroke-width="1.5"/></svg>
<span id="t97" class="t" style="left:447.5px;top:806.84px;line-height:20px;font-size:12px;color:#000;letter-spacing:-0.076px;">Console</span>
<svg style="left:496.0px;top:809.0px;" width="16" height="16" viewBox="0 0 16 16"><path d="M3.5 3.5h2.5l2 2 2-2h2.5v2.5l-2 2 2 2v2.5h-2.5l-2-2-2 2h-2.5v-2.5l2-2-2-2z" fill="#fff" stroke="#505050" stroke-width="1" stroke-linejoin="miter"/></svg>
<svg style="left:1678.0px;top:808.0px;" width="16" height="16" viewBox="0 0 16 16"><path d="M1.5 0.5h6.5l3 3v10h-9.5z" fill="#fbfdff" stroke="#b5ad98"/><path d="M8 0.5v3h3z" fill="#e9dfb8" stroke="#b5ad98" stroke-width="0.7"/><path d="M3.5 4.5h4M3.5 6.5h5.5M3.5 8.5h5.5M3.5 10.5h3.5" stroke="#8ea6d6" stroke-width="0.9"/><path d="M8.8 8.8l2.9 2.9 2.9-2.9 1.2 1.2-2.9 2.9 2.9 2.9-1.2 1.2-2.9-2.9-2.9 2.9-1.2-1.2 2.9-2.9-2.9-2.9z" fill="#6a6a6a" stroke="#555" stroke-width="0.5"/></svg>
<svg style="left:1701.5px;top:808.0px;" width="16" height="16" viewBox="0 0 16 16"><path d="M2.5 1.5h12v12h-12z" fill="#edf4fc" stroke="#a8966a"/><rect x="11" y="2" width="3" height="11" fill="#c9dcf4"/><rect x="11.5" y="2.8" width="2" height="2.2" fill="#fff" stroke="#6a8fca" stroke-width="0.6"/><rect x="11.5" y="10" width="2" height="2.2" fill="#fff" stroke="#6a8fca" stroke-width="0.6"/><rect x="1.5" y="9" width="7" height="5.5" rx="1" fill="#f6cf55" stroke="#a87a0a"/><path d="M3 9v-1.5c0-2.7 4-2.7 4 0v1.500" fill="none" stroke="#a87a0a" stroke-width="1.3"/><rect x="4.3" y="11" width="1.4" height="1.8" fill="#5a3a00"/></svg>
<div style="left:1723px;top:807px;width:1px;height:19px;background:#8c8c8c"></div>
<svg style="left:1733.0px;top:808.0px;" width="16" height="16" viewBox="0 0 16 16"><rect x="1.5" y="5.500" width="11" height="9" fill="#f4f9fe" stroke="#7a8aaa"/><rect x="2" y="6" width="8" height="2" fill="#3f7fd0"/><path d="M7 10.500l3.500-3.500" stroke="#1a4a7a" stroke-width="1"/><path d="M10.500 2.500l3.500 3.500-1.200 1.200-1-0.200-1.800 1.300-1.500-1.500 1.300-1.800-0.200-1z" fill="#3faa4a" stroke="#1a6a2a" stroke-width="0.800"/><path d="M12.200 1.300l2.600 2.600" stroke="#1a6a2a" stroke-width="2.200"/><path d="M12.200 1.300l2.600 2.600" stroke="#5fca6a" stroke-width="1"/></svg>
<svg style="left:1756.5px;top:808.0px;" width="16" height="16" viewBox="0 0 16 16"><rect x="2" y="1.5" width="12" height="9.5" rx="0.8" fill="#e4eefb" stroke="#2b5fae" stroke-width="2"/><path d="M5 4.8h5.5M5 7h3.5" stroke="#2b5fae" stroke-width="1"/><path d="M6.5 12v1.5M9.5 12v1.5" stroke="#2b5fae" stroke-width="1.4"/><path d="M3.5 14.3h9" stroke="#2b5fae" stroke-width="1.5"/></svg>
<svg style="left:1775.5px;top:808.0px;" width="16" height="16" viewBox="0 0 16 16"><path d="M4.300 6.200h7.400l-3.700 4.100z" fill="#1a1a1a"/></svg>
<svg style="left:1795.5px;top:808.0px;" width="16" height="16" viewBox="0 0 16 16"><defs><linearGradient id="gnc117" x1="0" y1="0" x2="1" y2="1"><stop offset="0" stop-color="#cfe3f7"/><stop offset="1" stop-color="#ffffff"/></linearGradient></defs><rect x="1" y="3.5" width="13" height="11" fill="url(#gnc117)" stroke="#b3975a"/><rect x="1" y="3.5" width="9" height="2.2" fill="#3f7fd0"/><path d="M12.5 7.5c0 4-3 6.500-7.500 7" fill="none" stroke="#f7d56a" stroke-width="1.1"/><path d="M12 0.800l1.100 2.300 2.300 1.100-2.300 1.100-1.100 2.300-1.100-2.300-2.300-1.100 2.300-1.100z" fill="#fff3c0" stroke="#c59a22" stroke-width="0.9"/></svg>
<svg style="left:1815.5px;top:808.0px;" width="16" height="16" viewBox="0 0 16 16"><path d="M4.300 6.200h7.400l-3.700 4.100z" fill="#1a1a1a"/></svg>
<svg style="left:1835.0px;top:808.0px;" width="16" height="16" viewBox="0 0 16 16"><rect x="3.5" y="3.5" width="9" height="3" fill="#fff" stroke="#5a5a5a"/></svg>
<svg style="left:1858.0px;top:808.0px;" width="16" height="16" viewBox="0 0 16 16"><rect x="3.5" y="3.5" width="9" height="9" fill="#fff" stroke="#5a5a5a"/><path d="M3.5 5.5h9" stroke="#5a5a5a" stroke-width="1"/></svg>
<div style="left:424px;top:829px;width:1459px;height:181px;background:#fff;border-radius:0 0 3px 3px"></div>
<span id="t98" class="t" style="left:425.5px;top:827.84px;line-height:20px;font-size:12px;color:#000;letter-spacing:0.150px;">TMS570LS1227_instaspin_bldc</span>
<div style="left:424px;top:846px;width:1459px;height:1px;background:#9a9a9a"></div>
<pre style="left:427px;top:850.2px;line-height:15px;color:#000;font-family:'Liberation Mono', monospace;font-size:12.4px;letter-spacing:-0.4412px;-webkit-text-stroke:0.1px;">CortexR4: GEL Output:   Memory Map Setup for Flash @ Address 0x0CortexR4: GEL Output:   Memory Map Setup for Flash @ Address 0x0 due to System Reset
CortexR4: GEL Output:   Memory Map Setup for Flash @ Address 0x0 due to System Reset</pre>
<div style="left:1867px;top:848px;width:16px;height:162px;background:#f0f0f0"></div>
<svg style="left:1870.0px;top:852px" width="10" height="8" viewBox="0 0 10 8"><path d="M1.6 6l3.4-3.2 3.4 3.2" fill="none" stroke="#b4b4b4" stroke-width="2"/></svg>
<svg style="left:1870.0px;top:998px" width="10" height="8" viewBox="0 0 10 8"><path d="M1.6 2l3.4 3.2 3.4-3.2" fill="none" stroke="#b4b4b4" stroke-width="2"/></svg>
<div style="left:0px;top:1010px;width:1920px;height:30px;background:#e6e6e6"></div>
<div style="left:0px;top:1039px;width:1920px;height:1px;background:#f6f6f6"></div>
<div style="left:1352px;top:1014px;width:30px;height:22px;background:#e6e6e6;box-shadow:-1px -1px 0 0 #fff inset, 1px 1px 0 0 #fdfdfd inset;border-right:1px solid #a0a0a0;border-bottom:1px solid #a0a0a0;box-sizing:border-box"></div>
<svg style="left:1355.5px;top:1016.5px;" width="16" height="16" viewBox="0 0 16 16"><rect x="5.5" y="6.5" width="9" height="7" fill="#dfeaf8" stroke="#5a7fc0"/><rect x="7" y="8" width="6" height="4" fill="#fff"/><path d="M8 14v1.5M12 14v1.5M6.5 15.5h7" stroke="#5a7fc0" stroke-width="0.9"/><circle cx="5.5" cy="11" r="3" fill="#eee" stroke="#999" stroke-width="0.8"/><circle cx="5.5" cy="11" r="1" fill="#fff" stroke="#999" stroke-width="0.6"/><path d="M2 8c0-4 3-5.5 6-4.5l0.3-2.5 3.5 4-4.5 2 0.3-2c-2-0.5-3.3 0.5-3.3 3z" fill="#fbd04a" stroke="#a87a1a" stroke-width="0.8" stroke-linejoin="round"/></svg>
<div style="left:1383.1px;top:1019.1px;width:2.8px;height:2.8px;background:#ffffff;opacity:.35"></div>
<div style="left:1383.5px;top:1019.5px;width:1.9px;height:1.9px;background:#908b78;border-radius:0.6px;opacity:.9"></div>
<div style="left:1383.1px;top:1023.85px;width:2.8px;height:2.8px;background:#ffffff;opacity:.35"></div>
<div style="left:1383.5px;top:1024.25px;width:1.9px;height:1.9px;background:#908b78;border-radius:0.6px;opacity:.9"></div>
<div style="left:1383.1px;top:1028.6px;width:2.8px;height:2.8px;background:#ffffff;opacity:.35"></div>
<div style="left:1383.5px;top:1029.0px;width:1.9px;height:1.9px;background:#908b78;border-radius:0.6px;opacity:.9"></div>
<div style="left:1383.1px;top:1033.35px;width:2.8px;height:2.8px;background:#ffffff;opacity:.35"></div>
<div style="left:1383.5px;top:1033.75px;width:1.9px;height:1.9px;background:#908b78;border-radius:0.6px;opacity:.9"></div>
<div style="left:1674.1px;top:1019.1px;width:2.8px;height:2.8px;background:#ffffff;opacity:.35"></div>
<div style="left:1674.5px;top:1019.5px;width:1.9px;height:1.9px;background:#908b78;border-radius:0.6px;opacity:.9"></div>
<div style="left:1674.1px;top:1023.85px;width:2.8px;height:2.8px;background:#ffffff;opacity:.35"></div>
<div style="left:1674.5px;top:1024.25px;width:1.9px;height:1.9px;background:#908b78;border-radius:0.6px;opacity:.9"></div>
<div style="left:1674.1px;top:1028.6px;width:2.8px;height:2.8px;background:#ffffff;opacity:.35"></div>
<div style="left:1674.5px;top:1029.0px;width:1.9px;height:1.9px;background:#908b78;border-radius:0.6px;opacity:.9"></div>
<div style="left:1674.1px;top:1033.35px;width:2.8px;height:2.8px;background:#ffffff;opacity:.35"></div>
<div style="left:1674.5px;top:1033.75px;width:1.9px;height:1.9px;background:#908b78;border-radius:0.6px;opacity:.9"></div>
<span id="t99" class="t" style="left:1681px;top:1016.84px;line-height:20px;font-size:12px;color:#000;letter-spacing:0.094px;">Free License</span>
<div style="left:1756.1px;top:1019.1px;width:2.8px;height:2.8px;background:#ffffff;opacity:.35"></div>
<div style="left:1756.5px;top:1019.5px;width:1.9px;height:1.9px;background:#908b78;border-radius:0.6px;opacity:.9"></div>
<div style="left:1756.1px;top:1023.85px;width:2.8px;height:2.8px;background:#ffffff;opacity:.35"></div>
<div style="left:1756.5px;top:1024.25px;width:1.9px;height:1.9px;background:#908b78;border-radius:0.6px;opacity:.9"></div>
<div style="left:1756.1px;top:1028.6px;width:2.8px;height:2.8px;background:#ffffff;opacity:.35"></div>
<div style="left:1756.5px;top:1029.0px;width:1.9px;height:1.9px;background:#908b78;border-radius:0.6px;opacity:.9"></div>
<div style="left:1756.1px;top:1033.35px;width:2.8px;height:2.8px;background:#ffffff;opacity:.35"></div>
<div style="left:1756.5px;top:1033.75px;width:1.9px;height:1.9px;background:#908b78;border-radius:0.6px;opacity:.9"></div>
<span id="t100" class="t" style="left:1763.5px;top:1016.84px;line-height:20px;font-size:12px;color:#000;letter-spacing:0.109px;">ARM</span>
<div style="left:1799px;top:1016px;width:1px;height:22px;background:#a0a0a0"></div>
<div style="left:1800px;top:1016px;width:1px;height:22px;background:#fff"></div>
<span id="t101" class="t" style="left:1809.5px;top:1016.84px;line-height:20px;font-size:12px;color:#000;letter-spacing:-0.562px;">BE8</span>
<div style="left:1839px;top:1016px;width:1px;height:22px;background:#a0a0a0"></div>
<div style="left:1840px;top:1016px;width:1px;height:22px;background:#fff"></div>
<span id="t102" class="t" style="left:1849.5px;top:1016.84px;line-height:20px;font-size:12px;color:#000;letter-spacing:-0.839px;">SPV</span>
<div style="left:1875.1px;top:1019.1px;width:2.8px;height:2.8px;background:#ffffff;opacity:.35"></div>
<div style="left:1875.5px;top:1019.5px;width:1.9px;height:1.9px;background:#908b78;border-radius:0.6px;opacity:.9"></div>
<div style="left:1875.1px;top:1023.85px;width:2.8px;height:2.8px;background:#ffffff;opacity:.35"></div>
<div style="left:1875.5px;top:1024.25px;width:1.9px;height:1.9px;background:#908b78;border-radius:0.6px;opacity:.9"></div>
<div style="left:1875.1px;top:1028.6px;width:2.8px;height:2.8px;background:#ffffff;opacity:.35"></div>
<div style="left:1875.5px;top:1029.0px;width:1.9px;height:1.9px;background:#908b78;border-radius:0.6px;opacity:.9"></div>
<div style="left:1875.1px;top:1033.35px;width:2.8px;height:2.8px;background:#ffffff;opacity:.35"></div>
<div style="left:1875.5px;top:1033.75px;width:1.9px;height:1.9px;background:#908b78;border-radius:0.6px;opacity:.9"></div>
<div style="left:0;top:1040px;width:1920px;height:8px;overflow:hidden;background:linear-gradient(90deg,#06121a 0,#08141c 28%,#0d1418 31%,#15181a 60%,#101214 100%)">
<div style="left:539px;top:0px;width:48px;height:8px;background:#3b4349"></div>
<div style="left:1915px;top:0px;width:1px;height:8px;background:#4a4a4a"></div>
<span class="t" style="left:1861px;top:4.3px;font-size:12px;line-height:14px;color:#fff">16:17</span>
<span class="t" style="left:1546px;top:5px;font-size:10px;line-height:12px;color:#fff">&#698;</span>
</div>
</body></html>
